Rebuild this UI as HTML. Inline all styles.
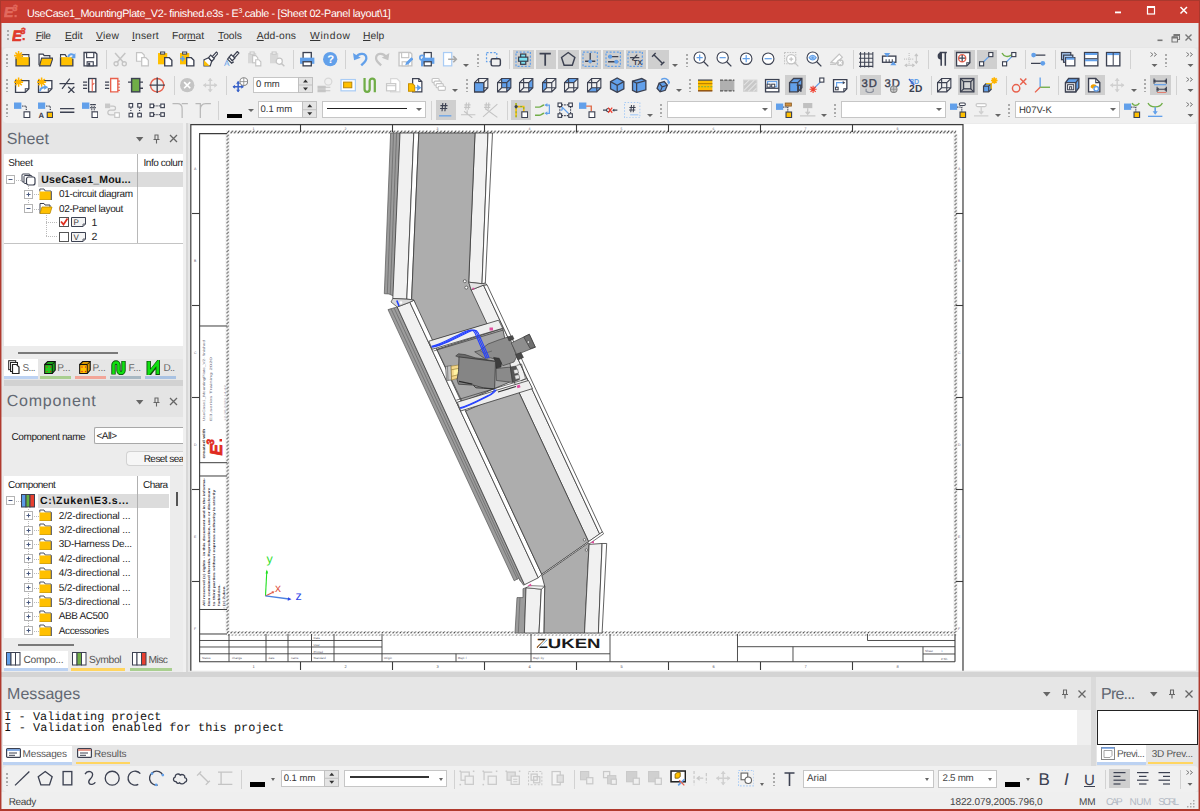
<!DOCTYPE html>
<html lang="en">
<head>
<meta charset="utf-8">
<title>UseCase1_MountingPlate_V2- finished.e3s - E3.cable - [Sheet 02-Panel layout\1]</title>
<style>
*{box-sizing:border-box;margin:0;padding:0}
html,body{width:1200px;height:811px;overflow:hidden}
body{position:relative;text-rendering:geometricPrecision;background:#e6e6e6;font-family:"Liberation Sans",sans-serif;font-size:11px;color:#222}
.abs{position:absolute}
#frame{position:absolute;left:0;top:23px;width:1200px;height:788px;border:1px solid #b03a2e;border-top:none;border-bottom-width:2px;pointer-events:none;z-index:50;box-shadow:inset 1px 0 0 rgba(176,58,46,.45),inset -1px 0 0 rgba(176,58,46,.45)}
#title{position:absolute;left:0;top:0;width:1200px;height:23px;background:#c93c31;color:#fff}
#title .txt{position:absolute;left:27px;top:4px;font-size:12px;letter-spacing:.1px;white-space:nowrap;font-family:"DejaVu Sans","Liberation Sans",sans-serif}
#title sup{font-size:8px;vertical-align:top;position:relative;top:-1px}
#menu{position:absolute;left:1px;top:23px;width:1198px;height:24px;background:#e9e9e9}
#menu span.m{position:absolute;top:5px;font-size:11.5px;color:#333;font-family:"DejaVu Sans","Liberation Sans",sans-serif;white-space:nowrap}
#menu u{text-decoration:underline}
.tbrow{position:absolute;left:4px;height:25px;background:#f0f0f0;border-radius:4px}
.ic{position:absolute;width:16px;height:16px;overflow:visible}
.sep{position:absolute;width:1px;height:19px;background:#d2d2d2}
.grip{position:absolute;width:2px;height:16px;background-image:radial-gradient(circle,#aaa 0.8px,transparent 1.1px);background-size:2px 4px}
.tog{position:absolute;height:21px;background:#cfcfcf}
.dd{position:absolute;width:0;height:0;border-left:3px solid transparent;border-right:3px solid transparent;border-top:3px solid #666}
.inp{position:absolute;background:#fff;border:1px solid #c4c4c4;height:19px;font-size:11px;color:#444;white-space:nowrap;overflow:hidden}
.inp span{position:absolute;left:4px;top:2px}
.panel-h{position:absolute;font-size:18px;color:#555;font-family:"DejaVu Sans","Liberation Sans",sans-serif;white-space:nowrap}
.tree{font-size:10.5px;color:#222;white-space:nowrap;letter-spacing:-.2px}
.tree .r{position:absolute;white-space:nowrap}
.tab{position:absolute;font-size:10.5px;color:#444;font-family:"DejaVu Sans","Liberation Sans",sans-serif;white-space:nowrap}
</style>
</head>
<body>

<div id="title">
<div class="abs" style="left:0;top:0;width:1200px;height:1px;background:#a9382d"></div><div class="abs" style="left:0;top:0;width:1px;height:23px;background:#a9382d"></div><div class="abs" style="left:1199px;top:0;width:1px;height:23px;background:#a9382d"></div>
<svg class="abs" style="left:4px;top:4px;" width="16" height="15" viewBox="0 0 16 15"><text x="0" y="13" font-family="Liberation Sans,sans-serif" font-size="14" font-weight="bold" font-style="italic" fill="#e26a5e" stroke="#e26a5e" stroke-width=".7">E</text><text x="8.5" y="7" font-family="Liberation Sans,sans-serif" font-size="9" font-weight="bold" font-style="italic" fill="#e26a5e" stroke="#e26a5e" stroke-width=".5">3</text><rect x="10.500" y="11" width="2.2" height="2.2" fill="#e26a5e"/></svg>
<div class="abs" style="left:27px;top:8px;font:10.8px 'Liberation Sans',sans-serif;letter-spacing:-0.33px;color:#fff;white-space:nowrap;line-height:12px">UseCase1_MountingPlate_V2- finished.e3s - E<span style="font-size:7px;position:relative;top:-4px">3</span>.cable - [Sheet 02-Panel layout\1]</div>
<svg class="abs" style="left:1110px;top:0px;" width="90" height="23" viewBox="0 0 90 23"><rect x="5" y="11.500" width="6" height="1.800" fill="#fff"/><rect x="37.500" y="7" width="7" height="7" fill="none" stroke="#fff" stroke-width="1.200"/><rect x="37" y="6" width="8" height="2" fill="#fff"/><path d="M70.500 7l6.500 6.500m0-6.500l-6.500 6.500" stroke="#fff" stroke-width="1.500" fill="none"/></svg>
</div>
<div id="menu">
<div class="grip" style="left:6px;top:6px;height:12px"></div>
<svg class="abs" style="left:11px;top:4px;" width="16" height="17" viewBox="0 0 16 17"><text x="0" y="14" font-family="Liberation Sans,sans-serif" font-size="15" font-weight="bold" font-style="italic" fill="#e0392b" stroke="#e0392b" stroke-width=".7">E</text><text x="8.5" y="7" font-family="Liberation Sans,sans-serif" font-size="9" font-weight="bold" font-style="italic" fill="#e0392b" stroke="#e0392b" stroke-width=".5">3</text><rect x="10.500" y="11" width="2.2" height="2.2" fill="#e0392b"/></svg>
<div class="abs" style="left:34.7px;top:8px;font:10.3px 'Liberation Sans',sans-serif;letter-spacing:-0.43px;color:#333;white-space:nowrap;line-height:11px;"><u>F</u>ile</div>
<div class="abs" style="left:64.0px;top:8px;font:10.3px 'Liberation Sans',sans-serif;letter-spacing:-0.02px;color:#333;white-space:nowrap;line-height:11px;"><u>E</u>dit</div>
<div class="abs" style="left:95.0px;top:8px;font:10.3px 'Liberation Sans',sans-serif;letter-spacing:0.29px;color:#333;white-space:nowrap;line-height:11px;"><u>V</u>iew</div>
<div class="abs" style="left:131.0px;top:8px;font:10.3px 'Liberation Sans',sans-serif;letter-spacing:0.19px;color:#333;white-space:nowrap;line-height:11px;"><u>I</u>nsert</div>
<div class="abs" style="left:171.0px;top:8px;font:10.3px 'Liberation Sans',sans-serif;letter-spacing:-0.12px;color:#333;white-space:nowrap;line-height:11px;">For<u>m</u>at</div>
<div class="abs" style="left:217.0px;top:8px;font:10.3px 'Liberation Sans',sans-serif;letter-spacing:-0.01px;color:#333;white-space:nowrap;line-height:11px;"><u>T</u>ools</div>
<div class="abs" style="left:255.7px;top:8px;font:10.3px 'Liberation Sans',sans-serif;letter-spacing:0.16px;color:#333;white-space:nowrap;line-height:11px;"><u>A</u>dd-ons</div>
<div class="abs" style="left:309.0px;top:8px;font:10.3px 'Liberation Sans',sans-serif;letter-spacing:0.67px;color:#333;white-space:nowrap;line-height:11px;"><u>W</u>indow</div>
<div class="abs" style="left:362.0px;top:8px;font:10.3px 'Liberation Sans',sans-serif;letter-spacing:0.04px;color:#333;white-space:nowrap;line-height:11px;"><u>H</u>elp</div>
<svg class="abs" style="left:1150px;top:9px;" width="46" height="14" viewBox="0 0 46 14"><rect x="6.500" y="7.500" width="5" height="1.600" fill="#777"/><path d="M21 5h5.500v5h-5.500zM23 5v-2.500h5.500v5h-2" fill="none" stroke="#777" stroke-width="1.100"/><path d="M21 5.500h5.500M23 3h5.500" stroke="#777" stroke-width="1.800"/><path d="M34.500 2.500l6 6m0-6l-6 6" stroke="#777" stroke-width="1.400" fill="none"/></svg>
</div>
<div class="abs" style="left:3px;top:47.5px;width:1194px;height:75px;background:#f0f0f0;border-radius:4px"></div>
<div class="grip" style="left:6px;top:52.5px;height:14px"></div>
<svg class="abs" style="left:14.3px;top:51.3px" width="16.4" height="16.4" viewBox="0 0 16 16"><path d="M8 6v-2.500h6.500v3" fill="#fff" stroke="#3c4151" stroke-width="1.1" /><rect x="2" y="6" width="13" height="8.5" fill="#ffc000" stroke="none" stroke-width="0"/><path d="M2 6v8.500h13v-8.500" fill="none" stroke="#3c4151" stroke-width="1.3" /><path d="M4.5 0.09999999999999964v8.8M0.09999999999999964 4.5h8.8M1.4 1.4l6.2 6.2M7.6 1.4l-6.2 6.2" fill="none" stroke="#ffb400" stroke-width="1.5" /><circle cx="4.5" cy="4.5" r="2" fill="#ffb400" stroke="none" stroke-width="0"/></svg>
<svg class="abs" style="left:36.8px;top:51.3px" width="16.4" height="16.4" viewBox="0 0 16 16"><path d="M2 14v-11h4l1 1.500h5.500v2" fill="#fff" stroke="#3c4151" stroke-width="1.2" /><path d="M2.500 14.500l2-7.500h11l-2.500 7.500z" fill="#ffc000" stroke="#3c4151" stroke-width="1.1" /></svg>
<svg class="abs" style="left:59.3px;top:51.3px" width="16.4" height="16.4" viewBox="0 0 16 16"><path d="M1.500 6v-2.500h4.500l1.500 2.500" fill="#fff" stroke="#3c4151" stroke-width="1.1" /><rect x="1.5" y="6" width="12" height="8.5" fill="#ffc000" stroke="none" stroke-width="0"/><path d="M1.500 6v8.500h12v-7" fill="none" stroke="#3c4151" stroke-width="1.3" /><path d="M9 6c0.500-3 4-4 6-1" fill="none" stroke="#62a0ea" stroke-width="2" /><path d="M16 2v5h-4.500z" fill="#62a0ea" stroke="none" stroke-width="0" /></svg>
<svg class="abs" style="left:81.8px;top:51.3px" width="16.4" height="16.4" viewBox="0 0 16 16"><path d="M2 1.500h11l1.500 1.500v11.500h-12.500z" fill="#fff" stroke="#3c4151" stroke-width="1.3" /><rect x="4.5" y="1.5" width="7" height="5" fill="#fff" stroke="#3c4151" stroke-width="1.1"/><rect x="5" y="10.5" width="6" height="4" fill="#fff" stroke="#3c4151" stroke-width="1.1"/><rect x="6" y="11.5" width="2" height="3" fill="#3c4151" stroke="none" stroke-width="0"/></svg>
<div class="sep" style="left:105.5px;top:50.0px"></div>
<svg class="abs" style="left:111.8px;top:51.3px" width="16.4" height="16.4" viewBox="0 0 16 16"><path d="M3 2l8 9M13 2l-8 9" fill="none" stroke="#c4c4c4" stroke-width="1.5" /><circle cx="4" cy="12.5" r="2" fill="none" stroke="#c4c4c4" stroke-width="1.3"/><circle cx="12" cy="12.5" r="2" fill="none" stroke="#c4c4c4" stroke-width="1.3"/></svg>
<svg class="abs" style="left:134.3px;top:51.3px" width="16.4" height="16.4" viewBox="0 0 16 16"><path d="M2.500 1.500h5l2.500 2.500v6h-7.500z" fill="#fff" stroke="#c4c4c4" stroke-width="1.2" /><path d="M7.500 6.500h4l2.500 2.500v5.500h-6.500z" fill="#fff" stroke="#c4c4c4" stroke-width="1.2" /></svg>
<svg class="abs" style="left:156.8px;top:51.3px" width="16.4" height="16.4" viewBox="0 0 16 16"><rect x="1" y="2" width="9" height="11" fill="#ffc000" stroke="none" stroke-width="0"/><rect x="3.5" y="1" width="4" height="2" fill="#fff" stroke="#3c4151" stroke-width="1"/><path d="M7.500 6.500h4.500l2.500 2.500v5.500h-7z" fill="#fff" stroke="#3c4151" stroke-width="1.3" /></svg>
<svg class="abs" style="left:179.3px;top:51.3px" width="16.4" height="16.4" viewBox="0 0 16 16"><rect x="1" y="2" width="9" height="11" fill="#ffc000" stroke="none" stroke-width="0"/><rect x="3.5" y="1" width="4" height="2" fill="#fff" stroke="#3c4151" stroke-width="1"/><path d="M7.500 6.500h4.500l2.500 2.500v5.500h-7z" fill="#fff" stroke="#3c4151" stroke-width="1.3" /><path d="M1 7.500h5M3.500 5v5" fill="none" stroke="#62a0ea" stroke-width="1.6" /></svg>
<svg class="abs" style="left:201.8px;top:51.3px" width="16.4" height="16.4" viewBox="0 0 16 16"><path d="M2 8.500l4.500-2 3 3.500-1.500 4.500h-6z" fill="#fff" stroke="#3c4151" stroke-width="1.2" /><path d="M2 9v5.500h5.500z" fill="#ffc000" stroke="none" stroke-width="0" /><path d="M6.500 6.500l2-2.500 3.500 3.500-2.500 2.500zM10 5.500l4-4.500 1.500 1.500-4 4.500z" fill="#fff" stroke="#3c4151" stroke-width="1.2" /></svg>
<svg class="abs" style="left:224.3px;top:51.3px" width="16.4" height="16.4" viewBox="0 0 16 16"><path d="M5 6l2-2.500 3.500 3.500-2.500 2.500zM9 5l4-4.500 1.500 1.500-4 4.500zM5 6l-1.500 2 4 4 2-1.500" fill="#fff" stroke="#3c4151" stroke-width="1.2" /><text x="0" y="15" font-family="Liberation Sans,sans-serif" font-size="8" font-weight="normal" fill="#62a0ea" >A</text></svg>
<svg class="abs" style="left:246.8px;top:51.3px" width="16.4" height="16.4" viewBox="0 0 16 16"><rect x="1" y="2" width="8" height="10" fill="#d8d8d8" stroke="none" stroke-width="0"/><rect x="3" y="1" width="4" height="2" fill="#fff" stroke="#c4c4c4" stroke-width="1"/><path d="M5.500 4.500h3l2 2v5h-5z" fill="#fff" stroke="#c4c4c4" stroke-width="1.1" /><path d="M8.500 8.500h3l2 2v4h-5z" fill="#fff" stroke="#c4c4c4" stroke-width="1.1" /></svg>
<svg class="abs" style="left:269.3px;top:51.3px" width="16.4" height="16.4" viewBox="0 0 16 16"><rect x="1" y="2" width="8" height="10" fill="#d8d8d8" stroke="none" stroke-width="0"/><rect x="3" y="1" width="4" height="2" fill="#fff" stroke="#c4c4c4" stroke-width="1"/><circle cx="10" cy="10" r="3" fill="#fff" stroke="#c4c4c4" stroke-width="1.2"/><path d="M12.200 12.200l2.800 2.800" fill="none" stroke="#c4c4c4" stroke-width="1.4" /></svg>
<div class="sep" style="left:292.5px;top:50.0px"></div>
<svg class="abs" style="left:299.3px;top:51.3px" width="16.4" height="16.4" viewBox="0 0 16 16"><rect x="4" y="1.5" width="8" height="6" fill="#fff" stroke="#3c4151" stroke-width="1.3"/><path d="M1 6.500h14v6h-14z" fill="#62a0ea" stroke="none" stroke-width="0" /><rect x="4" y="10.5" width="8" height="4" fill="#fff" stroke="#3c4151" stroke-width="1.3"/></svg>
<svg class="abs" style="left:321.8px;top:51.3px" width="16.4" height="16.4" viewBox="0 0 16 16"><circle cx="8" cy="8" r="7" fill="#62a0ea" stroke="none" stroke-width="0"/><text x="5.2" y="12" font-family="Liberation Sans,sans-serif" font-size="11" font-weight="bold" fill="#fff" >?</text></svg>
<div class="sep" style="left:345px;top:50.0px"></div>
<svg class="abs" style="left:351.8px;top:51.3px" width="16.4" height="16.4" viewBox="0 0 16 16"><path d="M4 6c3-5 10-4 10 1c0 3-3 5-5 7" fill="none" stroke="#62a0ea" stroke-width="2.2" /><path d="M1 2l1 7 6.500-2.500z" fill="#62a0ea" stroke="none" stroke-width="0" /></svg>
<svg class="abs" style="left:374.3px;top:51.3px" width="16.4" height="16.4" viewBox="0 0 16 16"><path d="M12 6c-3-5-10-4-10 1c0 3 3 5 5 7" fill="none" stroke="#c4c4c4" stroke-width="2.2" /><path d="M15 2l-1 7-6.500-2.500z" fill="#c4c4c4" stroke="none" stroke-width="0" /></svg>
<svg class="abs" style="left:396.8px;top:51.3px" width="16.4" height="16.4" viewBox="0 0 16 16"><path d="M2 1.500h11l1.500 1.500v11.500h-12.500z" fill="#fff" stroke="#c4c4c4" stroke-width="1.3" /><rect x="4.5" y="1.5" width="7" height="5" fill="#fff" stroke="#c4c4c4" stroke-width="1.1"/><rect x="5" y="10.5" width="6" height="4" fill="#fff" stroke="#c4c4c4" stroke-width="1.1"/><path d="M8 14l1-3 5-5 2 2-5 5z" fill="#62a0ea" stroke="none" stroke-width="0" /></svg>
<svg class="abs" style="left:419.3px;top:51.3px" width="16.4" height="16.4" viewBox="0 0 16 16"><rect x="5" y="1.5" width="7" height="6" fill="#fff" stroke="#3c4151" stroke-width="1.2"/><path d="M3 6.500h12v6h-12z" fill="#62a0ea" stroke="none" stroke-width="0" /><rect x="5" y="10.5" width="7" height="4" fill="#fff" stroke="#3c4151" stroke-width="1.2"/><path d="M3 15v-6" fill="none" stroke="#62a0ea" stroke-width="2" /><circle cx="3" cy="6.5" r="2.2" fill="none" stroke="#62a0ea" stroke-width="1.6"/></svg>
<svg class="abs" style="left:441.8px;top:51.3px" width="16.4" height="16.4" viewBox="0 0 16 16"><rect x="1.5" y="1.5" width="8" height="13" fill="#fff" stroke="#a9ccf5" stroke-width="1.2"/><path d="M6 8h8M11 5l3 3-3 3" fill="none" stroke="#a8a8a8" stroke-width="1.5" /></svg>
<div class="dd" style="left:463px;top:63.5px"></div>
<div class="grip" style="left:477px;top:52.5px;height:14px"></div>
<svg class="abs" style="left:485.3px;top:51.3px" width="16.4" height="16.4" viewBox="0 0 16 16"><rect x="1.5" y="1.5" width="10" height="9" fill="none" stroke="#62a0ea" stroke-width="1.2" stroke-dasharray="2 1.500"/><rect x="6" y="7.5" width="9" height="7" fill="#f0f0f0" stroke="#3c4151" stroke-width="1.4" rx="1.5"/></svg>
<div class="sep" style="left:508.5px;top:50.0px"></div>
<div class="tog" style="left:513px;top:49.5px;width:20.5px;height:19.5px"></div>
<svg class="abs" style="left:514.8px;top:51.3px" width="16.4" height="16.4" viewBox="0 0 16 16"><rect x="1" y="1" width="14" height="14" fill="none" stroke="#62a0ea" stroke-width="1.2" stroke-dasharray="2 1.500"/><rect x="5.5" y="3" width="5" height="10" fill="#7de0f0" stroke="#3c4151" stroke-width="1.2"/><rect x="3.5" y="6" width="9" height="4" fill="#7de0f0" stroke="#3c4151" stroke-width="1.2"/></svg>
<div class="tog" style="left:535.5px;top:49.5px;width:20.5px;height:19.5px"></div>
<svg class="abs" style="left:537.3px;top:51.3px" width="16.4" height="16.4" viewBox="0 0 16 16"><path d="M2.500 2.500h11M8 2.500v12" fill="none" stroke="#3c4151" stroke-width="1.7" /></svg>
<div class="tog" style="left:558px;top:49.5px;width:20.5px;height:19.5px"></div>
<svg class="abs" style="left:559.8px;top:51.3px" width="16.4" height="16.4" viewBox="0 0 16 16"><path d="M8 1.500l6.500 4.800-2.500 7.700h-8l-2.500-7.700z" fill="none" stroke="#3c4151" stroke-width="1.4" /></svg>
<div class="tog" style="left:580.5px;top:49.5px;width:20.5px;height:19.5px"></div>
<svg class="abs" style="left:582.3px;top:51.3px" width="16.4" height="16.4" viewBox="0 0 16 16"><rect x="1" y="1" width="14" height="14" fill="none" stroke="#62a0ea" stroke-width="1.2" stroke-dasharray="2 1.500"/><path d="M8 2v10M3 10h10" fill="none" stroke="#3c4151" stroke-width="1.3" /><circle cx="8" cy="10" r="1.8" fill="#62a0ea" stroke="none" stroke-width="0"/></svg>
<div class="tog" style="left:603px;top:49.5px;width:20.5px;height:19.5px"></div>
<svg class="abs" style="left:604.8px;top:51.3px" width="16.4" height="16.4" viewBox="0 0 16 16"><rect x="1" y="1" width="14" height="14" fill="none" stroke="#62a0ea" stroke-width="1.2" stroke-dasharray="2 1.500"/><path d="M3 5.500h10M3 10.500h10" fill="none" stroke="#3c4151" stroke-width="1.3" /><circle cx="5" cy="5.5" r="2" fill="#62a0ea" stroke="none" stroke-width="0"/><circle cx="11" cy="10.5" r="2" fill="#62a0ea" stroke="none" stroke-width="0"/></svg>
<div class="tog" style="left:625.5px;top:49.5px;width:20.5px;height:19.5px"></div>
<svg class="abs" style="left:627.3px;top:51.3px" width="16.4" height="16.4" viewBox="0 0 16 16"><rect x="1" y="1" width="14" height="14" fill="none" stroke="#62a0ea" stroke-width="1.2" stroke-dasharray="2 1.500"/><path d="M3 6.500h9M5 9l5-5.500" fill="none" stroke="#3c4151" stroke-width="1.2" /><text x="6" y="14" font-family="Liberation Sans,sans-serif" font-size="7" font-weight="bold" fill="#3c4151" >TX</text></svg>
<div class="tog" style="left:648px;top:49.5px;width:20.5px;height:19.5px"></div>
<svg class="abs" style="left:649.8px;top:51.3px" width="16.4" height="16.4" viewBox="0 0 16 16"><path d="M3.500 3.500l9 9M2 5.500l3.500-3.500M10.500 14l3.500-3.500" fill="none" stroke="#3c4151" stroke-width="1.4" /></svg>
<div class="dd" style="left:672px;top:63.5px"></div>
<div class="grip" style="left:685.5px;top:52.5px;height:14px"></div>
<svg class="abs" style="left:692.8px;top:51.3px" width="16.4" height="16.4" viewBox="0 0 16 16"><circle cx="6.5" cy="6.5" r="5.5" fill="#fff" stroke="#3c4151" stroke-width="1.1"/><path d="M10.500 10.500l4.500 4.500" fill="none" stroke="#3c4151" stroke-width="1.3" /><path d="M3.500 6.500h6M6.500 3.500v6" fill="none" stroke="#62a0ea" stroke-width="1.2" /></svg>
<svg class="abs" style="left:715.8px;top:51.3px" width="16.4" height="16.4" viewBox="0 0 16 16"><circle cx="6.5" cy="6.5" r="5.5" fill="#fff" stroke="#3c4151" stroke-width="1.1"/><path d="M10.500 10.500l4.500 4.500" fill="none" stroke="#3c4151" stroke-width="1.3" /><path d="M3.500 6.500h6" fill="none" stroke="#62a0ea" stroke-width="1.2" /></svg>
<svg class="abs" style="left:738.3px;top:51.3px" width="16.4" height="16.4" viewBox="0 0 16 16"><circle cx="8" cy="7.5" r="5.6" fill="#fff" stroke="#3c4151" stroke-width="1.1"/><path d="M4.500 7.500h7M8 4v7" fill="none" stroke="#62a0ea" stroke-width="1.2" /></svg>
<svg class="abs" style="left:759.8px;top:51.3px" width="16.4" height="16.4" viewBox="0 0 16 16"><circle cx="8" cy="7.5" r="5.6" fill="#fff" stroke="#3c4151" stroke-width="1.1"/><path d="M4.500 7.500h7" fill="none" stroke="#62a0ea" stroke-width="1.2" /></svg>
<svg class="abs" style="left:783.3px;top:51.3px" width="16.4" height="16.4" viewBox="0 0 16 16"><rect x="1.5" y="1.5" width="11" height="11" fill="none" stroke="#c4c4c4" stroke-width="1" stroke-dasharray="1.500 1"/><circle cx="8" cy="8" r="4.5" fill="#fff" stroke="#c4c4c4" stroke-width="1.2"/><path d="M11 11l4 4M6 8h4M8 6v4" fill="none" stroke="#c4c4c4" stroke-width="1.2" /></svg>
<svg class="abs" style="left:805.8px;top:51.3px" width="16.4" height="16.4" viewBox="0 0 16 16"><circle cx="6.5" cy="6.5" r="5.5" fill="#fff" stroke="#3c4151" stroke-width="1.1"/><path d="M10.500 10.500l4.500 4.500" fill="none" stroke="#3c4151" stroke-width="1.3" /><path d="M3 6.500c2-3 5-3 7 0c-2 3-5 3-7 0z" fill="#a9ccf5" stroke="#62a0ea" stroke-width="1" /><circle cx="6.5" cy="6.5" r="1.2" fill="#62a0ea" stroke="none" stroke-width="0"/></svg>
<svg class="abs" style="left:828.8px;top:51.3px" width="16.4" height="16.4" viewBox="0 0 16 16"><path d="M2 11l8-8 3 3-6 6z" fill="#fff" stroke="#c4c4c4" stroke-width="1.2" /><path d="M1 13h6" fill="none" stroke="#c4c4c4" stroke-width="1.2" /><circle cx="11" cy="11.5" r="3.5" fill="#c4c4c4" stroke="none" stroke-width="0"/><path d="M9.500 10l3 3m0-3l-3 3" fill="none" stroke="#fff" stroke-width="1.2" /></svg>
<div class="sep" style="left:852.5px;top:50.0px"></div>
<svg class="abs" style="left:858.3px;top:51.3px" width="16.4" height="16.4" viewBox="0 0 16 16"><path d="M1 3h14M1 7h14M1 11h14M1 15h14M2.500 1v15M6.500 1v15M10.500 1v15M14.500 1v15" fill="none" stroke="#3c4151" stroke-width="1" /></svg>
<svg class="abs" style="left:880.8px;top:51.3px" width="16.4" height="16.4" viewBox="0 0 16 16"><rect x="1.5" y="5" width="13" height="6" fill="#fff" stroke="#3c4151" stroke-width="1.3"/><path d="M5 11v-3M8 11v-3M11 11v-3" fill="none" stroke="#3c4151" stroke-width="1" /><path d="M3 2h6l-3 4z" fill="#62a0ea" stroke="none" stroke-width="0" /><path d="M9 14h6l-3-4z" fill="#62a0ea" stroke="none" stroke-width="0" /></svg>
<svg class="abs" style="left:903.3px;top:51.3px" width="16.4" height="16.4" viewBox="0 0 16 16"><path d="M1 8h10M6 2v12" fill="none" stroke="#c4c4c4" stroke-width="1.2"  stroke-dasharray="1 1"/><path d="M13 3v9M11.500 5l1.500-2 1.500 2M11.500 10l1.500 2 1.500-2M2 14h9M4 12.500l-2 1.500 2 1.500M9 12.500l2 1.500-2 1.500" fill="none" stroke="#c4c4c4" stroke-width="1" /></svg>
<div class="sep" style="left:927.5px;top:50.0px"></div>
<svg class="abs" style="left:933.3px;top:51.3px" width="16.4" height="16.4" viewBox="0 0 16 16"><path d="M8 1.500v13M12 1.500v13M13.500 1.500h-7" fill="none" stroke="#3c4151" stroke-width="1.5" /><path d="M8 1.500a3.500 3.500 0 0 0 0 7z" fill="#3c4151" stroke="none" stroke-width="0" /></svg>
<div class="tog" style="left:954px;top:49.5px;width:20.5px;height:19.5px"></div>
<svg class="abs" style="left:955.3px;top:51.3px" width="16.4" height="16.4" viewBox="0 0 16 16"><path d="M1.500 1.500h13v10l-3 3h-10z" fill="#fff" stroke="#3c4151" stroke-width="1.3" /><path d="M14.500 11.500h-3v3" fill="none" stroke="#3c4151" stroke-width="1" /><circle cx="7" cy="7" r="3.5" fill="none" stroke="#e8604c" stroke-width="1.3"/><path d="M4 7h6M7 4v6" fill="none" stroke="#3c4151" stroke-width="1.2" /></svg>
<div class="tog" style="left:976.5px;top:49.5px;width:20.5px;height:19.5px"></div>
<svg class="abs" style="left:978.3px;top:51.3px" width="16.4" height="16.4" viewBox="0 0 16 16"><path d="M4 12l8-8" fill="none" stroke="#62a0ea" stroke-width="1.2" /><rect x="1.5" y="10.5" width="4" height="4" fill="#fff" stroke="#3c4151" stroke-width="1.1"/><rect x="10.5" y="1.5" width="4" height="4" fill="#fff" stroke="#3c4151" stroke-width="1.1"/></svg>
<svg class="abs" style="left:1000.8px;top:51.3px" width="16.4" height="16.4" viewBox="0 0 16 16"><path d="M4 12l8-8" fill="none" stroke="#62a0ea" stroke-width="1.2" /><path d="M1 2c2 4 6 4 9 2" fill="none" stroke="#70ad47" stroke-width="1.4" /><rect x="1.5" y="10.5" width="4" height="4" fill="#fff" stroke="#3c4151" stroke-width="1.1"/><rect x="10.5" y="1.5" width="4" height="4" fill="#fff" stroke="#3c4151" stroke-width="1.1"/></svg>
<div class="sep" style="left:1024.5px;top:50.0px"></div>
<svg class="abs" style="left:1030.3px;top:51.3px" width="16.4" height="16.4" viewBox="0 0 16 16"><path d="M5 4h10M1 12h10" fill="none" stroke="#3c4151" stroke-width="1.3" /><circle cx="3.5" cy="4" r="2.3" fill="#62a0ea" stroke="none" stroke-width="0"/><circle cx="12.5" cy="12" r="2.3" fill="#62a0ea" stroke="none" stroke-width="0"/></svg>
<div class="sep" style="left:1054.5px;top:50.0px"></div>
<svg class="abs" style="left:1060.3px;top:51.3px" width="16.4" height="16.4" viewBox="0 0 16 16"><rect x="1.5" y="1.5" width="9" height="7" fill="#a9ccf5" stroke="#3c4151" stroke-width="1.2"/><rect x="3.5" y="4" width="9" height="7" fill="#a9ccf5" stroke="#3c4151" stroke-width="1.2"/><rect x="5.5" y="6.5" width="9" height="8" fill="#fff" stroke="#3c4151" stroke-width="1.2"/><path d="M6 7.500h8" fill="none" stroke="#62a0ea" stroke-width="2" /></svg>
<svg class="abs" style="left:1082.8px;top:51.3px" width="16.4" height="16.4" viewBox="0 0 16 16"><rect x="1.5" y="1.5" width="13" height="13" fill="#fff" stroke="#3c4151" stroke-width="1.3"/><path d="M2 3h12M2 9h12" fill="none" stroke="#62a0ea" stroke-width="2" /><path d="M2 7.500h12" fill="none" stroke="#3c4151" stroke-width="1" /></svg>
<svg class="abs" style="left:1105.3px;top:51.3px" width="16.4" height="16.4" viewBox="0 0 16 16"><rect x="1.5" y="1.5" width="13" height="13" fill="#fff" stroke="#3c4151" stroke-width="1.3"/><path d="M2 3h12" fill="none" stroke="#62a0ea" stroke-width="2" /><path d="M8 2v12" fill="none" stroke="#3c4151" stroke-width="1" /></svg>
<div class="sep" style="left:1129.5px;top:50.0px"></div>
<svg class="abs" style="left:1150px;top:49.5px;" width="8" height="20" viewBox="0 0 8 20"><path d="M0.500 2.500l2.500 2-2.500 2M4 2.500l2.500 2-2.500 2" fill="none" stroke="#777" stroke-width="1"/><path d="M1.500 14h6l-3 3z" fill="#666"/></svg>
<div class="grip" style="left:1165px;top:52.5px;height:14px"></div>
<svg class="abs" style="left:1186px;top:49.5px;" width="8" height="20" viewBox="0 0 8 20"><path d="M0.500 2.500l2.500 2-2.500 2M4 2.500l2.500 2-2.500 2" fill="none" stroke="#777" stroke-width="1"/><path d="M1.500 14h6l-3 3z" fill="#666"/></svg>
<div class="grip" style="left:6px;top:78px;height:14px"></div>
<svg class="abs" style="left:14.3px;top:76.5px" width="16.4" height="16.4" viewBox="0 0 16 16"><path d="M1.500 3.500h13v8l-3.500 3.500h-9.500z" fill="#fff" stroke="#3c4151" stroke-width="1.3" /><path d="M14.500 11.500h-3.500v3.500" fill="none" stroke="#3c4151" stroke-width="1" /><path d="M4.5 0.5999999999999996v8.8M0.09999999999999964 5h8.8M1.4 1.9l6.2 6.2M7.6 1.9l-6.2 6.2" fill="none" stroke="#ffb400" stroke-width="1.5" /><circle cx="4.5" cy="5" r="2" fill="#ffb400" stroke="none" stroke-width="0"/></svg>
<svg class="abs" style="left:36.8px;top:76.5px" width="16.4" height="16.4" viewBox="0 0 16 16"><path d="M1.500 3.500h13v8l-3.500 3.500h-9.500z" fill="#fff" stroke="#3c4151" stroke-width="1.3" /><path d="M14.500 11.500h-3.500v3.500" fill="none" stroke="#3c4151" stroke-width="1" /><path d="M4.5 0.5999999999999996v8.8M0.09999999999999964 5h8.8M1.4 1.9l6.2 6.2M7.6 1.9l-6.2 6.2" fill="none" stroke="#ffb400" stroke-width="1.5" /><circle cx="4.5" cy="5" r="2" fill="#ffb400" stroke="none" stroke-width="0"/><path d="M3 14c0-3 2-4 5-4" fill="none" stroke="#62a0ea" stroke-width="1.8" /><path d="M7 7.500l4 2.500-4 2.500z" fill="#62a0ea" stroke="none" stroke-width="0" /></svg>
<svg class="abs" style="left:59.3px;top:76.5px" width="16.4" height="16.4" viewBox="0 0 16 16"><path d="M0.500 6.500h14.500M3 11.500l7.500-10" fill="none" stroke="#3c4151" stroke-width="1.2" /><path d="M9 9.500l6 6m0-6l-6 6" fill="none" stroke="#3c4151" stroke-width="1.3" /></svg>
<svg class="abs" style="left:81.8px;top:76.5px" width="16.4" height="16.4" viewBox="0 0 16 16"><rect x="6.5" y="1.5" width="7" height="13" fill="#fff" stroke="#3c4151" stroke-width="1.3"/><path d="M10 2v12M10 8l2-2" fill="none" stroke="#e8604c" stroke-width="1.1" /><path d="M1 5h4M1 8h4M1 11h4" fill="none" stroke="#3c4151" stroke-width="1.2" /></svg>
<svg class="abs" style="left:104.3px;top:76.5px" width="16.4" height="16.4" viewBox="0 0 16 16"><path d="M6.500 1.500h7v13h-7z" fill="#fff" stroke="#e8604c" stroke-width="1.3" /><path d="M13.500 4h2M13.500 7h2M13.500 10h2M13.500 13h2" fill="none" stroke="#e8604c" stroke-width="1.2" /><path d="M1 5h4M1 8h4M1 11h4" fill="none" stroke="#3c4151" stroke-width="1.2" /></svg>
<svg class="abs" style="left:126.8px;top:76.5px" width="16.4" height="16.4" viewBox="0 0 16 16"><rect x="4.5" y="1.5" width="8" height="13" fill="#70ad47" stroke="#3c4151" stroke-width="1.4"/><path d="M1 5h3.500M12.500 5h3.500M12.500 11h3.500" fill="none" stroke="#3c4151" stroke-width="1.4" /></svg>
<svg class="abs" style="left:148.8px;top:76.5px" width="16.4" height="16.4" viewBox="0 0 16 16"><circle cx="8" cy="8" r="6.5" fill="none" stroke="#e8604c" stroke-width="1.4"/><path d="M8 0.500v15M0.500 8h15" fill="none" stroke="#3c4151" stroke-width="1.3" /></svg>
<div class="sep" style="left:173.5px;top:75.5px"></div>
<svg class="abs" style="left:179.3px;top:76.5px" width="16.4" height="16.4" viewBox="0 0 16 16"><circle cx="8" cy="8" r="7" fill="#c4c4c4" stroke="none" stroke-width="0"/><path d="M5 5l6 6m0-6l-6 6" fill="none" stroke="#fff" stroke-width="1.6" /></svg>
<svg class="abs" style="left:201.8px;top:76.5px" width="16.4" height="16.4" viewBox="0 0 16 16"><path d="M8 1.500v13M1.500 8h13" fill="none" stroke="#d0d0d0" stroke-width="1.4" /><path d="M5.500 4l2.500-3 2.500 3zM5.500 12l2.500 3 2.500-3zM4 5.500l-3 2.500 3 2.500zM12 5.500l3 2.500-3 2.500z" fill="#d0d0d0" stroke="none" stroke-width="0" /></svg>
<div class="sep" style="left:225.5px;top:75.5px"></div>
<svg class="abs" style="left:231.8px;top:76.5px" width="16.4" height="16.4" viewBox="0 0 16 16"><circle cx="11.5" cy="4.5" r="3.8" fill="#fff" stroke="#888" stroke-width="1"/><path d="M7.800 4.500h7.400M11.500 0.800v7.400" fill="none" stroke="#888" stroke-width="0.8" /><path d="M6 4.500v10M1 9.500h10" fill="none" stroke="#3a62c8" stroke-width="1.5" /><path d="M4 6.500l2-2.500 2 2.500zM4 12.500l2 2.500 2-2.500zM3 7.500l-2.500 2 2.500 2zM9 7.500l2.500 2-2.500 2z" fill="#3a62c8" stroke="none" stroke-width="0" /></svg>
<svg class="abs" style="left:316.8px;top:76.5px" width="16.4" height="16.4" viewBox="0 0 16 16"><path d="M1 9h7v2h-7zM1 12.500h7v2h-7zM8 10h5M8 13.500h5" fill="#c4c4c4" stroke="#c4c4c4" stroke-width="1" /><circle cx="11" cy="4.5" r="3.5" fill="none" stroke="#d8d8d8" stroke-width="1.2"/></svg>
<svg class="abs" style="left:339.8px;top:76.5px" width="16.4" height="16.4" viewBox="0 0 16 16"><rect x="1" y="2.5" width="14" height="11" fill="#fff" stroke="#a9ccf5" stroke-width="1.2"/><rect x="3.5" y="5" width="8" height="5.5" fill="#ffc000" stroke="#b8860b" stroke-width="1"/></svg>
<svg class="abs" style="left:361.8px;top:76.5px" width="16.4" height="16.4" viewBox="0 0 16 16"><path d="M2.500 1v11a2.500 2.500 0 0 0 5 0v-8a2.500 2.500 0 0 1 5 0v11" fill="none" stroke="#70ad47" stroke-width="2.2" /></svg>
<svg class="abs" style="left:384.8px;top:76.5px" width="16.4" height="16.4" viewBox="0 0 16 16"><path d="M5.500 1.500h6l3 3v10h-9z" fill="#fff" stroke="#d8d8d8" stroke-width="1.2" /><rect x="1.5" y="6.5" width="9" height="7" fill="#fff" stroke="#c8c8c8" stroke-width="1.2"/><path d="M1.500 8.500h9" fill="none" stroke="#c8c8c8" stroke-width="1" /></svg>
<svg class="abs" style="left:407.3px;top:76.5px" width="16.4" height="16.4" viewBox="0 0 16 16"><path d="M5.500 1.500h6l3 3v10h-9z" fill="#fff" stroke="#3c4151" stroke-width="1.2" /><path d="M11.500 1.500v3h3" fill="none" stroke="#3c4151" stroke-width="1" /><path d="M1.500 6.500h4l2 2v5.500h-6z" fill="#ffc000" stroke="#c89000" stroke-width="1" /><path d="M8 10.500h4M10.500 8.500l2.500 2-2.500 2z" fill="#62a0ea" stroke="#62a0ea" stroke-width="1.2" /></svg>
<svg class="abs" style="left:429.8px;top:76.5px" width="16.4" height="16.4" viewBox="0 0 16 16"><rect x="2" y="1.5" width="7" height="4" fill="#fff" stroke="#c4c4c4" stroke-width="1.1" rx="1"/><rect x="4" y="4" width="7" height="4" fill="#fff" stroke="#c4c4c4" stroke-width="1.1" rx="1"/><rect x="6" y="6.5" width="7" height="4" fill="#fff" stroke="#c4c4c4" stroke-width="1.1" rx="1"/><rect x="8" y="9" width="7" height="4" fill="#fff" stroke="#c4c4c4" stroke-width="1.1" rx="1"/></svg>
<div class="dd" style="left:451.5px;top:89.0px"></div>
<div class="grip" style="left:465.5px;top:78px;height:14px"></div>
<svg class="abs" style="left:473.3px;top:76.5px" width="16.4" height="16.4" viewBox="0 0 16 16"><path d="M1.500 5.500h9v9h-9zM5.500 1.500h9v9h-9zM1.500 5.500l4-4M10.500 5.500l4-4M1.500 14.500l4-4M10.500 14.500l4-4" fill="none" stroke="#3c4151" stroke-width="1.1" /><path d="M1.500 5.500h9v9h-9z" fill="#62a0ea" stroke="#3c4151" stroke-width="1.1" /></svg>
<svg class="abs" style="left:495.8px;top:76.5px" width="16.4" height="16.4" viewBox="0 0 16 16"><path d="M5.500 1.500h9v9h-9z" fill="#62a0ea" stroke="none" stroke-width="0" /><path d="M10.500 5.500l4-4v9l-4 4z" fill="#62a0ea" stroke="none" stroke-width="0" /><path d="M1.500 5.500h9v9h-9zM5.500 1.500h9v9h-9zM1.500 5.500l4-4M10.500 5.500l4-4M1.500 14.500l4-4M10.500 14.500l4-4" fill="none" stroke="#3c4151" stroke-width="1.1" /></svg>
<svg class="abs" style="left:518.3px;top:76.5px" width="16.4" height="16.4" viewBox="0 0 16 16"><path d="M10.500 5.500l4-4v9l-4 4z" fill="#62a0ea" stroke="none" stroke-width="0" /><path d="M1.500 5.500h9v9h-9zM5.500 1.500h9v9h-9zM1.500 5.500l4-4M10.500 5.500l4-4M1.500 14.500l4-4M10.500 14.500l4-4" fill="none" stroke="#3c4151" stroke-width="1.1" /></svg>
<svg class="abs" style="left:540.8px;top:76.5px" width="16.4" height="16.4" viewBox="0 0 16 16"><path d="M1.500 5.500l4-4v9l-4 4z" fill="#62a0ea" stroke="none" stroke-width="0" /><path d="M1.500 5.500h9v9h-9zM5.500 1.500h9v9h-9zM1.500 5.500l4-4M10.500 5.500l4-4M1.500 14.500l4-4M10.500 14.500l4-4" fill="none" stroke="#3c4151" stroke-width="1.1" /></svg>
<svg class="abs" style="left:563.3px;top:76.5px" width="16.4" height="16.4" viewBox="0 0 16 16"><path d="M1.500 5.500l4-4h9l-4 4z" fill="#62a0ea" stroke="none" stroke-width="0" /><path d="M1.500 5.500h9v9h-9zM5.500 1.500h9v9h-9zM1.500 5.500l4-4M10.500 5.500l4-4M1.500 14.500l4-4M10.500 14.500l4-4" fill="none" stroke="#3c4151" stroke-width="1.1" /></svg>
<svg class="abs" style="left:585.8px;top:76.5px" width="16.4" height="16.4" viewBox="0 0 16 16"><path d="M1.500 14.500l4-4h9l-4 4z" fill="#62a0ea" stroke="none" stroke-width="0" /><path d="M1.500 5.500h9v9h-9zM5.500 1.500h9v9h-9zM1.500 5.500l4-4M10.500 5.500l4-4M1.500 14.500l4-4M10.500 14.500l4-4" fill="none" stroke="#3c4151" stroke-width="1.1" /></svg>
<svg class="abs" style="left:608.8px;top:76.5px" width="16.4" height="16.4" viewBox="0 0 16 16"><path d="M8 1l6.500 3.500v7l-6.500 3.500-6.500-3.500v-7z" fill="#62a0ea" stroke="#3c4151" stroke-width="1.3" /><path d="M1.500 4.500l6.500 3.500 6.500-3.500M8 8v7" fill="none" stroke="#3c4151" stroke-width="1.2" /></svg>
<svg class="abs" style="left:631.3px;top:76.5px" width="16.4" height="16.4" viewBox="0 0 16 16"><path d="M1.500 4l9-2.500 4 2v9l-9 2.500-4-2z" fill="#62a0ea" stroke="#3c4151" stroke-width="1.3" /><path d="M1.500 4l4 2 9-2.500M5.500 6v9" fill="none" stroke="#3c4151" stroke-width="1.2" /></svg>
<svg class="abs" style="left:653.8px;top:76.5px" width="16.4" height="16.4" viewBox="0 0 16 16"><path d="M5 6l5-1.500 3 3.500-2 5-5 1.500-3-3.500z" fill="#62a0ea" stroke="#3c4151" stroke-width="1.3" /><path d="M5 6l3 3.500 5-1.500M8 9.500l-2 5" fill="none" stroke="#3c4151" stroke-width="1.1" /><path d="M7 2.500c3-2 7-1 7.500 2.500" fill="none" stroke="#62a0ea" stroke-width="1.4" /><path d="M12.500 4.500h3.500l-1.500 3z" fill="#62a0ea" stroke="none" stroke-width="0" /></svg>
<div class="dd" style="left:675.5px;top:89.0px"></div>
<div class="grip" style="left:689px;top:78px;height:14px"></div>
<svg class="abs" style="left:696.8px;top:76.5px" width="16.4" height="16.4" viewBox="0 0 16 16"><rect x="1" y="3" width="14" height="10.5" fill="#ffc000" stroke="none" stroke-width="0"/><path d="M1 3h14" fill="none" stroke="#3c4151" stroke-width="1.2" /><path d="M1 6.500h14" fill="none" stroke="#b07800" stroke-width="1" /><path d="M1 9.500h14" fill="none" stroke="#70ad47" stroke-width="1"  stroke-dasharray="2 1"/><path d="M1 13.500h14" fill="none" stroke="#8a4a10" stroke-width="1.4" /></svg>
<svg class="abs" style="left:719.3px;top:76.5px" width="16.4" height="16.4" viewBox="0 0 16 16"><rect x="1.5" y="3.5" width="13" height="9.5" fill="#b0b0b0" stroke="#b0b0b0" stroke-width="1"/><path d="M1 3h14M1 13.500h14" fill="none" stroke="#555" stroke-width="1.2"  stroke-dasharray="3 1.200"/></svg>
<svg class="abs" style="left:742.3px;top:76.5px" width="16.4" height="16.4" viewBox="0 0 16 16"><rect x="1.5" y="3" width="13" height="11" fill="#c8c8c8" stroke="#d4d4d4" stroke-width="1"/><path d="M2 8l5-5M2 13l10-10M6 14l8-8M11 14l3-3" fill="none" stroke="#e4e4e4" stroke-width="1" /></svg>
<svg class="abs" style="left:764.3px;top:76.5px" width="16.4" height="16.4" viewBox="0 0 16 16"><rect x="1.5" y="2.5" width="13" height="12" fill="#fff" stroke="#3c4151" stroke-width="1.3"/><path d="M1.500 11h13" fill="none" stroke="#3c4151" stroke-width="1.2" /><rect x="3.5" y="4.5" width="9" height="5" fill="none" stroke="#62a0ea" stroke-width="1.1"/><rect x="3" y="7" width="3" height="3" fill="#fff" stroke="#3c4151" stroke-width="1"/><rect x="7.5" y="7" width="3" height="3" fill="#fff" stroke="#3c4151" stroke-width="1"/></svg>
<div class="tog" style="left:785px;top:75px;width:21px;height:19.5px"></div>
<svg class="abs" style="left:786.8px;top:76.5px" width="16.4" height="16.4" viewBox="0 0 16 16"><path d="M2.500 5.500l4-4h8v9l-4 4h-8z" fill="#62a0ea" stroke="#3c4151" stroke-width="1.3" /><path d="M2.500 5.500h8v9M10.500 5.500l4-4" fill="none" stroke="#3c4151" stroke-width="1.2" /><path d="M9.500 8h5M11 8v6.500M13.500 8v6.500" fill="none" stroke="#3c4151" stroke-width="1.5" /></svg>
<svg class="abs" style="left:809.3px;top:76.5px" width="16.4" height="16.4" viewBox="0 0 16 16"><path d="M4 12l8-8" fill="none" stroke="#62a0ea" stroke-width="1.2" /><rect x="10.5" y="1" width="4" height="4" fill="#fff" stroke="#3c4151" stroke-width="1.1"/><path d="M4 8.500v7M0.500 12h7M1.500 9.500l5 5M6.500 9.500l-5 5" fill="none" stroke="#f04030" stroke-width="1.1" /></svg>
<svg class="abs" style="left:831.8px;top:76.5px" width="16.4" height="16.4" viewBox="0 0 16 16"><path d="M1.500 2.500h13v9l-3 3h-10z" fill="#fff" stroke="#3c4151" stroke-width="1.3" /><path d="M14.500 11.500h-3v3" fill="none" stroke="#3c4151" stroke-width="1" /><path d="M4.500 11v-5.500h7" fill="none" stroke="#62a0ea" stroke-width="1.1" /><rect x="3.5" y="10" width="2.5" height="2.5" fill="#fff" stroke="#3c4151" stroke-width="1"/><path d="M10.500 4l2.500 1.500-2.500 1.500z" fill="#3c4151" stroke="none" stroke-width="0" /></svg>
<div class="sep" style="left:856px;top:75.5px"></div>
<div class="tog" style="left:860px;top:75px;width:21px;height:19.5px"></div>
<svg class="abs" style="left:861.3px;top:76.5px" width="16.4" height="16.4" viewBox="0 0 16 16"><text x="0.5" y="10" font-family="Liberation Sans,sans-serif" font-size="11" font-weight="normal" fill="#3c4151" textLength="15" stroke="#3c4151" stroke-width=".35">3D</text><path d="M5 11.500v2.500c2 1.500 5 1.500 7 0v-2.500" fill="none" stroke="#8a8f9c" stroke-width="1.2" /></svg>
<svg class="abs" style="left:884.3px;top:76.5px" width="16.4" height="16.4" viewBox="0 0 16 16"><text x="0.5" y="10" font-family="Liberation Sans,sans-serif" font-size="11" font-weight="normal" fill="#3c4151" textLength="15" stroke="#3c4151" stroke-width=".35">3D</text><circle cx="9.5" cy="12" r="3.2" fill="#c8c8c8" stroke="#888" stroke-width="1"/><path d="M6.300 12h6.400M9.500 8.800v6.400" fill="none" stroke="#888" stroke-width="0.7" /></svg>
<svg class="abs" style="left:906.8px;top:76.5px" width="16.4" height="16.4" viewBox="0 0 16 16"><text x="3" y="7" font-family="Liberation Sans,sans-serif" font-size="7" font-weight="bold" fill="#62a0ea" >3D</text><text x="2" y="15" font-family="Liberation Sans,sans-serif" font-size="10" font-weight="bold" fill="#3c4151" textLength="13">2D</text><path d="M2 2l5 6" fill="none" stroke="#3a62c8" stroke-width="1.4" /></svg>
<div class="sep" style="left:930.5px;top:75.5px"></div>
<svg class="abs" style="left:936.3px;top:76.5px" width="16.4" height="16.4" viewBox="0 0 16 16"><path d="M1.500 5.500h9v9h-9zM5.500 1.500h9v9h-9zM1.500 5.500l4-4M10.500 5.500l4-4M1.500 14.500l4-4M10.500 14.500l4-4" fill="none" stroke="#3c4151" stroke-width="1.1" /></svg>
<div class="tog" style="left:957.5px;top:75px;width:20.5px;height:19.5px"></div>
<svg class="abs" style="left:958.8px;top:76.5px" width="16.4" height="16.4" viewBox="0 0 16 16"><rect x="1.5" y="1.5" width="13" height="13" fill="#c0c0c0" stroke="#3c4151" stroke-width="1.3"/><rect x="4.5" y="4.5" width="7" height="7" fill="#d8d8d8" stroke="#3c4151" stroke-width="1.2"/><path d="M1.500 1.500l3 3M14.500 1.500l-3 3M1.500 14.500l3-3M14.500 14.500l-3-3" fill="none" stroke="#3c4151" stroke-width="1.1" /></svg>
<svg class="abs" style="left:981.8px;top:76.5px" width="16.4" height="16.4" viewBox="0 0 16 16"><path d="M1.500 9l2.500-2.500h5v5.500l-2.500 2.500h-5z" fill="#62a0ea" stroke="#3c4151" stroke-width="1.2" /><path d="M1.500 9h5v5.500M6.500 9l2.500-2.500" fill="none" stroke="#3c4151" stroke-width="1.1" /><path d="M4 6.500h5v5" fill="none" stroke="#ffc000" stroke-width="1.2" /><path d="M12 0.2999999999999998v6.4M8.8 3.5h6.4M9.7 1.2l4.5 4.5M14.3 1.2l-4.5 4.5" fill="none" stroke="#ffb400" stroke-width="1.5" /><circle cx="12" cy="3.5" r="2" fill="#ffb400" stroke="none" stroke-width="0"/></svg>
<div class="sep" style="left:1005.5px;top:75.5px"></div>
<svg class="abs" style="left:1011.3px;top:76.5px" width="16.4" height="16.4" viewBox="0 0 16 16"><circle cx="5" cy="11" r="3.6" fill="none" stroke="#e8604c" stroke-width="1.4"/><path d="M9 1.500l6 6m0-6l-6 6" fill="none" stroke="#e8604c" stroke-width="1.4" /></svg>
<svg class="abs" style="left:1033.8px;top:76.5px" width="16.4" height="16.4" viewBox="0 0 16 16"><path d="M6 0.500v9.500" fill="none" stroke="#62a0ea" stroke-width="1.3" /><path d="M6 10h10" fill="none" stroke="#70ad47" stroke-width="1.3" /><path d="M6 10l-5 5" fill="none" stroke="#e8604c" stroke-width="1.3" /></svg>
<div class="sep" style="left:1057.5px;top:75.5px"></div>
<svg class="abs" style="left:1063.8px;top:76.5px" width="16.4" height="16.4" viewBox="0 0 16 16"><path d="M1.500 5.500l3-4h10v9l-3 4h-10z" fill="#62a0ea" stroke="#3c4151" stroke-width="1.3" /><rect x="1.5" y="5.5" width="10" height="9" fill="#fff" stroke="#3c4151" stroke-width="1.3"/><path d="M11.500 5.500l3-4" fill="none" stroke="#3c4151" stroke-width="1.2" /><rect x="3.5" y="7.5" width="6" height="5" fill="none" stroke="#3c4151" stroke-width="1"/><path d="M5.500 12.500v-3h2v3" fill="none" stroke="#3c4151" stroke-width="1" /></svg>
<div class="tog" style="left:1084.5px;top:75px;width:20.5px;height:19.5px"></div>
<svg class="abs" style="left:1086.3px;top:76.5px" width="16.4" height="16.4" viewBox="0 0 16 16"><path d="M2.500 1.500h7l4 4v9h-11z" fill="#fff" stroke="#3c4151" stroke-width="1.3" /><path d="M9.500 1.500v4h4" fill="none" stroke="#3c4151" stroke-width="1" /><path d="M4.500 10a3 3 0 0 1 6 0h-2.500l-1.500 1.500z" fill="#f0a000" stroke="none" stroke-width="0" /><circle cx="10" cy="11.5" r="2.2" fill="#fff" stroke="#62a0ea" stroke-width="1.4"/></svg>
<svg class="abs" style="left:1108.8px;top:76.5px" width="16.4" height="16.4" viewBox="0 0 16 16"><path d="M8 1.500v13M1.500 8h13" fill="none" stroke="#d0d0d0" stroke-width="1.4" /><path d="M5.500 4l2.500-3 2.500 3zM5.500 12l2.500 3 2.500-3zM4 5.500l-3 2.500 3 2.500zM12 5.500l3 2.500-3 2.500z" fill="#d0d0d0" stroke="none" stroke-width="0" /></svg>
<div class="dd" style="left:1130.5px;top:89.0px"></div>
<div class="grip" style="left:1144px;top:78px;height:14px"></div>
<div class="tog" style="left:1150px;top:75px;width:21px;height:19.5px"></div>
<svg class="abs" style="left:1151.8px;top:76.5px" width="16.4" height="16.4" viewBox="0 0 16 16"><path d="M2 1.500v5M14 1.500v5M2 4h12M5 9.500v5M14 9.500v5M5 12h9" fill="none" stroke="#3c4151" stroke-width="1.1" /><path d="M3.500 2.800l-1.500 1.200 1.500 1.200M12.500 2.800l1.500 1.200-1.500 1.200M6.500 10.800l-1.500 1.200 1.500 1.200M12.500 10.800l1.500 1.200-1.500 1.200" fill="none" stroke="#3c4151" stroke-width="1" /><path d="M2 7.500h12" fill="none" stroke="#62a0ea" stroke-width="1.2" /><path d="M5 15.500h9" fill="none" stroke="#e8604c" stroke-width="1.2" /></svg>
<div class="sep" style="left:1175.5px;top:75.5px"></div>
<svg class="abs" style="left:1186px;top:75px;" width="8" height="20" viewBox="0 0 8 20"><path d="M0.500 2.500l2.500 2-2.500 2M4 2.500l2.500 2-2.500 2" fill="none" stroke="#777" stroke-width="1"/><path d="M1.500 14h6l-3 3z" fill="#666"/></svg>
<div class="abs" style="left:253px;top:76.5px;width:59.5px;height:16.0px;background:#fff;border:1px solid #c6c6c6"></div><div class="abs" style="left:256.0px;top:79px;font:9.5px 'Liberation Sans',sans-serif;letter-spacing:0px;color:#333;white-space:nowrap;line-height:11px;">0 mm</div>
<div class="abs" style="left:297.5px;top:76.5px;width:15px;height:16px;background:#e4e4e4;border:1px solid #c0c0c0"></div><svg class="abs" style="left:297.5px;top:76.5px;" width="15" height="16" viewBox="0 0 15 16"><path d="M1 8.0h13" stroke="#c0c0c0" stroke-width="1"/><path d="M5.0 5.5h5l-2.500-3zM5.0 10.5h5l-2.500 3z" fill="#333"/></svg>
<div class="grip" style="left:6px;top:103px;height:14px"></div>
<svg class="abs" style="left:14.3px;top:101.8px" width="16.4" height="16.4" viewBox="0 0 16 16"><rect x="0" y="0.5" width="7.2" height="6.2" fill="#62a0ea" stroke="none" stroke-width="0"/><path d="M8 4h4v5" fill="none" stroke="#3c4151" stroke-width="1.2"  stroke-dasharray="1.200 1"/><rect x="9.8" y="9.6" width="5.6" height="5.6" fill="#fff" stroke="#3c4151" stroke-width="1.1"/></svg>
<svg class="abs" style="left:36.8px;top:101.8px" width="16.4" height="16.4" viewBox="0 0 16 16"><rect x="1" y="0.5" width="7" height="6.2" fill="#62a0ea" stroke="none" stroke-width="0"/><path d="M9 4h4v4" fill="none" stroke="#3c4151" stroke-width="1.2"  stroke-dasharray="1.200 1"/><text x="1.5" y="15.5" font-family="Liberation Sans,sans-serif" font-size="7.5" font-weight="bold" fill="#3c4151" >A</text><rect x="10" y="10" width="5.2" height="5.2" fill="#ffc000" stroke="#3c4151" stroke-width="1.1"/></svg>
<svg class="abs" style="left:59.3px;top:101.8px" width="16.4" height="16.4" viewBox="0 0 16 16"><path d="M1 6.500h14M1 10h14" fill="none" stroke="#3c4151" stroke-width="1.3" /></svg>
<svg class="abs" style="left:81.8px;top:101.8px" width="16.4" height="16.4" viewBox="0 0 16 16"><rect x="0" y="0.5" width="7.2" height="6.2" fill="#62a0ea" stroke="none" stroke-width="0"/><path d="M8 2.500h5.500M8 5.500h5.500M9.500 2v7M12 2v7" fill="none" stroke="#3c4151" stroke-width="1.2"  stroke-dasharray="1.200 1"/><rect x="9.8" y="9.6" width="5.6" height="5.6" fill="#fff" stroke="#3c4151" stroke-width="1.1"/></svg>
<svg class="abs" style="left:104.3px;top:101.8px" width="16.4" height="16.4" viewBox="0 0 16 16"><rect x="1" y="1.5" width="5" height="4.5" fill="#c8c8c8" stroke="none" stroke-width="0"/><path d="M6 4h3c3 0 3 4 0 4h-3c-3 0-3 4.500 0 4.500h4" fill="none" stroke="#c4c4c4" stroke-width="1.2" /><rect x="10.5" y="10.5" width="4.5" height="4.5" fill="#fff" stroke="#c4c4c4" stroke-width="1.1"/></svg>
<svg class="abs" style="left:126.8px;top:101.8px" width="16.4" height="16.4" viewBox="0 0 16 16"><rect x="2" y="1.5" width="3.5" height="3.5" fill="#fff" stroke="#3c4151" stroke-width="1.1"/><rect x="2" y="11" width="3.5" height="3.5" fill="#fff" stroke="#3c4151" stroke-width="1.1"/><rect x="10.5" y="1.5" width="3.5" height="3.5" fill="#fff" stroke="#3c4151" stroke-width="1.1"/><rect x="10.5" y="11" width="3.5" height="3.5" fill="#fff" stroke="#3c4151" stroke-width="1.1"/><path d="M3.750 5.500v5M12.250 5.500v5" fill="none" stroke="#3c4151" stroke-width="1.2"  stroke-dasharray="1.200 1"/></svg>
<svg class="abs" style="left:149.3px;top:101.8px" width="16.4" height="16.4" viewBox="0 0 16 16"><rect x="1" y="2" width="3.5" height="3.5" fill="#fff" stroke="#3c4151" stroke-width="1.1"/><rect x="1" y="10.5" width="3.5" height="3.5" fill="#fff" stroke="#3c4151" stroke-width="1.1"/><rect x="11.5" y="2" width="3.5" height="3.5" fill="#fff" stroke="#3c4151" stroke-width="1.1"/><rect x="11.5" y="10.5" width="3.5" height="3.5" fill="#fff" stroke="#3c4151" stroke-width="1.1"/><path d="M5 3.750h6M5 12.250h6" fill="none" stroke="#3c4151" stroke-width="1.2"  stroke-dasharray="1.200 1"/></svg>
<svg class="abs" style="left:172.3px;top:101.8px" width="16.4" height="16.4" viewBox="0 0 16 16"><path d="M0.500 1.500h5c3 0 4.400 2 4.400 5v9M15.500 1.500h-6" fill="none" stroke="#b8b8b8" stroke-width="1.2" /></svg>
<svg class="abs" style="left:194.8px;top:101.8px" width="16.4" height="16.4" viewBox="0 0 16 16"><path d="M0.500 1.500h4.700v14M15.500 1.500h-5c-4 0-5.300 3-5.300 6" fill="none" stroke="#b8b8b8" stroke-width="1.2" /></svg>
<div class="sep" style="left:218px;top:100.5px"></div>
<div class="sep" style="left:431px;top:100.5px"></div>
<div class="tog" style="left:435.5px;top:100px;width:20.5px;height:19.5px"></div>
<svg class="abs" style="left:437.3px;top:101.8px" width="16.4" height="16.4" viewBox="0 0 16 16"><path d="M5.7 1l-0.8 8M8.5 1l-0.8 8M3.3 3.6h7M3.0 6.4h7" fill="none" stroke="#3c4151" stroke-width="1.1" /><path d="M2 13.500h12" fill="none" stroke="#62a0ea" stroke-width="1.2" /></svg>
<svg class="abs" style="left:459.8px;top:101.8px" width="16.4" height="16.4" viewBox="0 0 16 16"><path d="M6.3 0.5l-0.7 7M8.7 0.5l-0.7 7M4.3 2.8h6M4.0 5.3h6" fill="none" stroke="#c4c4c4" stroke-width="1.1" /><path d="M1 12.500h14M4 9l8 6.500M7 8v4.500" fill="none" stroke="#c4c4c4" stroke-width="1.1" /></svg>
<svg class="abs" style="left:482.3px;top:101.8px" width="16.4" height="16.4" viewBox="0 0 16 16"><path d="M4.3 0.5l-0.7 7M6.7 0.5l-0.7 7M2.3 2.8h6M2.0 5.3h6" fill="none" stroke="#c4c4c4" stroke-width="1.1" /><path d="M1 14.500l14-12.500M4 7l11 8" fill="none" stroke="#c4c4c4" stroke-width="1.1" /></svg>
<div class="sep" style="left:506.5px;top:100.5px"></div>
<div class="tog" style="left:510.5px;top:100px;width:20.5px;height:19.5px"></div>
<svg class="abs" style="left:511.8px;top:101.8px" width="16.4" height="16.4" viewBox="0 0 16 16"><path d="M4 1v14" fill="none" stroke="#ffc000" stroke-width="1.6" /><path d="M4 1v14" fill="none" stroke="#70ad47" stroke-width="1"  stroke-dasharray="2 2"/><path d="M4 4.500h7.500v5" fill="none" stroke="#ffc000" stroke-width="1.5" /><path d="M4 4.500h7.500v5" fill="none" stroke="#70ad47" stroke-width="1"  stroke-dasharray="2 2"/><circle cx="4" cy="4.5" r="1.5" fill="#3c4151" stroke="none" stroke-width="0"/><rect x="9.6" y="9.6" width="5.6" height="5.6" fill="#fff" stroke="#3c4151" stroke-width="1.1"/></svg>
<svg class="abs" style="left:534.3px;top:101.8px" width="16.4" height="16.4" viewBox="0 0 16 16"><path d="M1 5h4c2 0 3-2 5-2M1 13h4c2 0 3-2 5-2" fill="none" stroke="#70ad47" stroke-width="1.4" /><path d="M11 3h4v8h-4" fill="none" stroke="#62a0ea" stroke-width="1.2" /><path d="M13 1l-2.500 2 2.500 2zM13 9l-2.500 2 2.500 2z" fill="#62a0ea" stroke="none" stroke-width="0" /></svg>
<svg class="abs" style="left:556.8px;top:101.8px" width="16.4" height="16.4" viewBox="0 0 16 16"><rect x="1" y="1" width="3.5" height="3.5" fill="#fff" stroke="#3c4151" stroke-width="1.1"/><rect x="1" y="11.5" width="3.5" height="3.5" fill="#fff" stroke="#3c4151" stroke-width="1.1"/><rect x="11.5" y="1" width="3.5" height="3.5" fill="#fff" stroke="#3c4151" stroke-width="1.1"/><rect x="11.5" y="11.5" width="3.5" height="3.5" fill="#fff" stroke="#3c4151" stroke-width="1.1"/><path d="M4.500 2.750h7M4.500 13.250h7M2.750 4.500v7M13.250 4.500v7" fill="none" stroke="#3c4151" stroke-width="1.1"  stroke-dasharray="1.500 1"/><path d="M5 5l6 6M5 8h-1.500M5 5v3" fill="none" stroke="#62a0ea" stroke-width="1.2" /></svg>
<svg class="abs" style="left:579.3px;top:101.8px" width="16.4" height="16.4" viewBox="0 0 16 16"><rect x="0" y="0.5" width="7.2" height="6.2" fill="#62a0ea" stroke="none" stroke-width="0"/><path d="M7 4h5v5" fill="none" stroke="#e07050" stroke-width="1.4" /><rect x="9.8" y="9.6" width="5.6" height="5.6" fill="#fff" stroke="#3c4151" stroke-width="1.1"/></svg>
<svg class="abs" style="left:601.8px;top:101.8px" width="16.4" height="16.4" viewBox="0 0 16 16"><path d="M1 8h4M11 8h4" fill="none" stroke="#3c4151" stroke-width="1.3" /><circle cx="6" cy="8" r="1.6" fill="none" stroke="#3c4151" stroke-width="1"/><path d="M12 6.500l-2 1.500 2 1.500z" fill="#3c4151" stroke="none" stroke-width="0" /><path d="M6 5.500l4 5m0-5l-4 5" fill="none" stroke="#f04030" stroke-width="1.2" /></svg>
<svg class="abs" style="left:624.3px;top:101.8px" width="16.4" height="16.4" viewBox="0 0 16 16"><rect x="0.5" y="0.5" width="15" height="15" fill="none" stroke="#a9ccf5" stroke-width="1" stroke-dasharray="1.500 1.500"/><path d="M7.3 3l-0.7 7M9.7 3l-0.7 7M5.3 5.3h6M5.0 7.8h6" fill="none" stroke="#3c4151" stroke-width="1" /><path d="M6 12.500h8" fill="none" stroke="#a9ccf5" stroke-width="1.2" /></svg>
<div class="dd" style="left:646.5px;top:114.0px"></div>
<div class="grip" style="left:660px;top:103px;height:14px"></div>
<svg class="abs" style="left:776.3px;top:101.8px" width="16.4" height="16.4" viewBox="0 0 16 16"><rect x="0" y="1.5" width="7" height="6.2" fill="#62a0ea" stroke="none" stroke-width="0"/><rect x="9" y="1" width="6" height="3" fill="#d09040" stroke="#8a5a20" stroke-width="0.8"/><path d="M7 5h4.500v5" fill="none" stroke="#3c4151" stroke-width="1.2"  stroke-dasharray="1.200 1"/><rect x="9.8" y="9.8" width="5.4" height="5.4" fill="#ffc000" stroke="#3c4151" stroke-width="1.1"/></svg>
<svg class="abs" style="left:799.3px;top:101.8px" width="16.4" height="16.4" viewBox="0 0 16 16"><rect x="4" y="1" width="9" height="5" fill="#c0c0c0" stroke="none" stroke-width="0"/><path d="M8.500 6v6M6.500 9.500l2 2.500 2-2.500M1 13.500h15" fill="none" stroke="#c8c8c8" stroke-width="1.3" /></svg>
<div class="dd" style="left:820.5px;top:114.0px"></div>
<div class="grip" style="left:834px;top:103px;height:14px"></div>
<svg class="abs" style="left:950.3px;top:101.8px" width="16.4" height="16.4" viewBox="0 0 16 16"><rect x="0" y="1.5" width="7" height="6.2" fill="#62a0ea" stroke="none" stroke-width="0"/><rect x="9" y="1" width="6" height="2.5" fill="#fff" stroke="#3c4151" stroke-width="1" rx="1.2"/><path d="M7 5h4.500v5" fill="none" stroke="#3c4151" stroke-width="1.2"  stroke-dasharray="1.200 1"/><rect x="9.8" y="9.8" width="5.4" height="5.4" fill="#ffc000" stroke="#3c4151" stroke-width="1.1"/></svg>
<svg class="abs" style="left:973.3px;top:101.8px" width="16.4" height="16.4" viewBox="0 0 16 16"><rect x="3" y="1.5" width="10" height="3" fill="#fff" stroke="#c8c8c8" stroke-width="1.2" rx="1.5"/><path d="M8 4.500v7M6 9l2 2.500 2-2.500M1 13.500h14" fill="none" stroke="#d0d0d0" stroke-width="1.3" /></svg>
<div class="dd" style="left:994.5px;top:114.0px"></div>
<div class="grip" style="left:1008px;top:103px;height:14px"></div>
<svg class="abs" style="left:1124.3px;top:101.8px" width="16.4" height="16.4" viewBox="0 0 16 16"><rect x="0" y="1.5" width="7" height="6.2" fill="#62a0ea" stroke="none" stroke-width="0"/><path d="M8 1c1 3 5 3 7 0" fill="none" stroke="#70ad47" stroke-width="1.3" /><path d="M7 5h4.500v5" fill="none" stroke="#3c4151" stroke-width="1.2"  stroke-dasharray="1.200 1"/><rect x="9.8" y="9.8" width="5.4" height="5.4" fill="#ffc000" stroke="#3c4151" stroke-width="1.1"/></svg>
<svg class="abs" style="left:1146.8px;top:101.8px" width="16.4" height="16.4" viewBox="0 0 16 16"><path d="M1 1c2 5 12 5 14 0" fill="none" stroke="#70ad47" stroke-width="1.3" /><path d="M8 5v6" fill="none" stroke="#62a0ea" stroke-width="1.6" /><path d="M5.500 9l2.500 3.500 2.500-3.500z" fill="#62a0ea" stroke="none" stroke-width="0" /><path d="M1 14h14" fill="none" stroke="#62a0ea" stroke-width="1.3" /></svg>
<svg class="abs" style="left:1186px;top:100px;" width="8" height="20" viewBox="0 0 8 20"><path d="M0.500 2.500l2.500 2-2.500 2M4 2.500l2.500 2-2.500 2" fill="none" stroke="#777" stroke-width="1"/><path d="M1.500 14h6l-3 3z" fill="#666"/></svg>
<div class="abs" style="left:226.500px;top:113.500px;width:15.500px;height:4.500px;background:#000"></div>
<div class="dd" style="left:248px;top:109px"></div>
<div class="abs" style="left:258px;top:100.5px;width:59px;height:17.5px;background:#fff;border:1px solid #c6c6c6"></div><div class="abs" style="left:260.5px;top:104px;font:9.5px 'Liberation Sans',sans-serif;letter-spacing:0px;color:#333;white-space:nowrap;line-height:11px;">0.1 mm</div>
<div class="abs" style="left:301.5px;top:100.5px;width:15.5px;height:17.5px;background:#e4e4e4;border:1px solid #c0c0c0"></div><svg class="abs" style="left:301.5px;top:100.5px;" width="15.5" height="17.5" viewBox="0 0 15.5 17.5"><path d="M1 8.75h13.5" stroke="#c0c0c0" stroke-width="1"/><path d="M5.25 6.25h5l-2.500-3zM5.25 11.25h5l-2.500 3z" fill="#333"/></svg>
<div class="abs" style="left:321.5px;top:100.5px;width:104.0px;height:17.5px;background:#fff;border:1px solid #c6c6c6"></div><div class="dd" style="left:415.5px;top:108.0px"></div>
<div class="abs" style="left:327px;top:107.500px;width:80px;height:1.500px;background:#222"></div>
<div class="abs" style="left:667px;top:100.5px;width:105px;height:17.5px;background:#fff;border:1px solid #c6c6c6"></div><div class="dd" style="left:762px;top:108.0px"></div>
<div class="abs" style="left:841px;top:100.5px;width:105px;height:17.5px;background:#fff;border:1px solid #c6c6c6"></div><div class="dd" style="left:936px;top:108.0px"></div>
<div class="abs" style="left:1015px;top:100.5px;width:105px;height:17.5px;background:#fff;border:1px solid #c6c6c6"></div><div class="dd" style="left:1110px;top:108.0px"></div>
<div class="abs" style="left:1019.0px;top:105px;font:9.5px 'Liberation Sans',sans-serif;letter-spacing:0px;color:#333;white-space:nowrap;line-height:11px;">H07V-K</div>
<div class="abs" style="left:1px;top:123px;width:186px;height:258px;background:#e6e6e6;"></div>
<div class="abs" style="left:6.7px;top:131px;font:16px 'Liberation Sans',sans-serif;letter-spacing:0.10px;color:#626872;white-space:nowrap;line-height:17px;">Sheet</div>
<svg class="abs" style="left:135.7px;top:137.0px;" width="8" height="5" viewBox="0 0 8 5"><path d="M0 0h7.400l-3.700 4.400z" fill="#666"/></svg><svg class="abs" style="left:152px;top:133.5px;" width="9" height="10" viewBox="0 0 9 10"><path d="M2.500 1h4M3 1v4.500M6 1v4.500M1.500 5.500h6M4.500 5.500v4" fill="none" stroke="#666" stroke-width="1.100"/></svg><svg class="abs" style="left:169px;top:134.0px;" width="9" height="9" viewBox="0 0 9 9"><path d="M1 1l7 7m0-7l-7 7" stroke="#666" stroke-width="1.300" fill="none"/></svg>
<div class="abs" style="left:3.5px;top:154px;width:180px;height:192px;background:#fff;"></div>
<div class="abs" style="left:3.5px;top:346px;width:180px;height:13px;background:#ececec;"></div>
<div class="abs" style="left:8.3px;top:158px;font:10px 'Liberation Sans',sans-serif;letter-spacing:-0.38px;color:#222;white-space:nowrap;line-height:11px;">Sheet</div>
<div class="abs" style="left:143.400px;top:156px;width:39.600px;height:14px;overflow:hidden"><div class="abs" style="left:0.0px;top:2px;font:10px 'Liberation Sans',sans-serif;letter-spacing:-0.42px;color:#222;white-space:nowrap;line-height:11px;">Info column</div></div>
<div class="abs" style="left:137.2px;top:154px;width:1px;height:89px;background:#b8b8b8;"></div>
<div class="abs" style="left:3.5px;top:243px;width:180px;height:1px;background:#c4c4c4;"></div>
<div class="abs" style="left:37.7px;top:172px;width:145.3px;height:14.5px;background:#dcdcdc;"></div>
<div class="abs" style="left:137.2px;top:172px;width:1px;height:14.5px;background:#b0b0b0;"></div>
<div class="abs" style="left:14px;top:179.5px;width:7px;height:1px;background-image:linear-gradient(90deg,#bbb 50%,transparent 50%);background-size:2px 1px"></div>
<div class="abs" style="left:28px;top:186px;width:1px;height:23px;background-image:linear-gradient(180deg,#bbb 50%,transparent 50%);background-size:1px 2px"></div>
<div class="abs" style="left:32px;top:194px;width:7px;height:1px;background-image:linear-gradient(90deg,#bbb 50%,transparent 50%);background-size:2px 1px"></div>
<div class="abs" style="left:32px;top:208.5px;width:7px;height:1px;background-image:linear-gradient(90deg,#bbb 50%,transparent 50%);background-size:2px 1px"></div>
<div class="abs" style="left:46px;top:215px;width:1px;height:21px;background-image:linear-gradient(180deg,#bbb 50%,transparent 50%);background-size:1px 2px"></div>
<div class="abs" style="left:46px;top:221.5px;width:12px;height:1px;background-image:linear-gradient(90deg,#bbb 50%,transparent 50%);background-size:2px 1px"></div>
<div class="abs" style="left:46px;top:236px;width:12px;height:1px;background-image:linear-gradient(90deg,#bbb 50%,transparent 50%);background-size:2px 1px"></div>
<svg class="abs" style="left:6.0px;top:175.0px;" width="9" height="9" viewBox="0 0 9 9"><rect x="0.500" y="0.500" width="8" height="8" fill="#fff" stroke="#b4b4b4" stroke-width="1"/><path d="M2.500 4.500h4" stroke="#4a5a80" stroke-width="1"/></svg>
<svg class="abs" style="left:20.5px;top:173px;" width="15" height="13" viewBox="0 0 15 13"><rect x="1" y="1" width="8" height="8" rx="1" fill="#fff" stroke="#3c4151" stroke-width="1"/><rect x="3" y="2.500" width="8" height="8" rx="1" fill="#fff" stroke="#3c4151" stroke-width="1"/><rect x="5.500" y="4" width="8.500" height="8" rx="2" fill="#fff" stroke="#3c4151" stroke-width="1.200"/></svg>
<div class="abs" style="left:41.3px;top:174px;font:bold 10.5px 'Liberation Sans',sans-serif;letter-spacing:0.21px;color:#111;white-space:nowrap;line-height:12px;">UseCase1_Mou...</div>
<svg class="abs" style="left:24.0px;top:189.5px;" width="9" height="9" viewBox="0 0 9 9"><rect x="0.500" y="0.500" width="8" height="8" fill="#fff" stroke="#b4b4b4" stroke-width="1"/><path d="M2.500 4.500h4" stroke="#4a5a80" stroke-width="1"/><path d="M4.500 2.500v4" stroke="#4a5a80" stroke-width="1"/></svg>
<svg class="abs" style="left:39px;top:187.5px;" width="14" height="12" viewBox="0 0 14 12"><path d="M0.800 3.500v-2.500h4.200l1.200 2h5.800v1" fill="#fff" stroke="#3c4151" stroke-width=".9"/><rect x="0.500" y="3.500" width="11.500" height="8.500" fill="#ffc000"/><path d="M12.300 3.500v8.800h-12" fill="none" stroke="#3c4151" stroke-width="1"/></svg>
<div class="abs" style="left:59.0px;top:189px;font:10px 'Liberation Sans',sans-serif;letter-spacing:-0.32px;color:#222;white-space:nowrap;line-height:11px;">01-circuit diagram</div>
<svg class="abs" style="left:24.0px;top:204.0px;" width="9" height="9" viewBox="0 0 9 9"><rect x="0.500" y="0.500" width="8" height="8" fill="#fff" stroke="#b4b4b4" stroke-width="1"/><path d="M2.500 4.500h4" stroke="#4a5a80" stroke-width="1"/></svg>
<svg class="abs" style="left:39px;top:202px;" width="14" height="12" viewBox="0 0 14 12"><path d="M1 11.500v-10h4l1 1.500h5v2" fill="#fff" stroke="#3c4151" stroke-width="1"/><path d="M1 11.500l2-6.500h10l-2 6.500z" fill="#ffc000" stroke="#b88a00" stroke-width=".8"/></svg>
<div class="abs" style="left:59.0px;top:204px;font:10px 'Liberation Sans',sans-serif;letter-spacing:-0.37px;color:#222;white-space:nowrap;line-height:11px;">02-Panel layout</div>
<svg class="abs" style="left:59px;top:217px;" width="10" height="10" viewBox="0 0 10 10"><rect x="0.500" y="0.500" width="9" height="9" fill="#fff" stroke="#555" stroke-width="1"/><path d="M2 4.500l2.500 3 4-6" fill="none" stroke="#e03020" stroke-width="1.800"/></svg>
<svg class="abs" style="left:71px;top:217px;" width="15" height="10" viewBox="0 0 15 10"><path d="M0.500 0.500h14v6.500l-2.500 2.500h-11.500z" fill="#f4f4f4" stroke="#3c4151" stroke-width="1"/><path d="M14.500 7h-2.500v2.500" fill="none" stroke="#3c4151" stroke-width=".8"/><text x="2.500" y="8" font-family="Liberation Sans,sans-serif" font-size="8" fill="#333">P</text></svg>
<div class="abs" style="left:91.5px;top:217px;font:10.5px 'Liberation Sans',sans-serif;letter-spacing:0px;color:#222;white-space:nowrap;line-height:12px;">1</div>
<svg class="abs" style="left:59px;top:231.5px;" width="10" height="10" viewBox="0 0 10 10"><rect x="0.500" y="0.500" width="9" height="9" fill="#fff" stroke="#555" stroke-width="1"/></svg>
<svg class="abs" style="left:71px;top:231.5px;" width="15" height="10" viewBox="0 0 15 10"><path d="M0.500 0.500h14v6.500l-2.500 2.500h-11.500z" fill="#f4f4f4" stroke="#3c4151" stroke-width="1"/><path d="M14.500 7h-2.500v2.500" fill="none" stroke="#3c4151" stroke-width=".8"/><text x="2.500" y="8" font-family="Liberation Sans,sans-serif" font-size="8" fill="#333">V</text></svg>
<div class="abs" style="left:91.5px;top:231px;font:10.5px 'Liberation Sans',sans-serif;letter-spacing:0px;color:#222;white-space:nowrap;line-height:12px;">2</div>
<div class="abs" style="left:18px;top:352.3px;width:100px;height:1.6px;background:#7a7a7a;"></div>
<div class="abs" style="left:3.5px;top:359px;width:34.5px;height:20px;background:#fff;"></div>
<div class="abs" style="left:3.5px;top:376.3px;width:34.5px;height:2.7px;background:#bcd2f2;"></div>
<div class="abs" style="left:22.5px;top:363px;font:10px 'Liberation Sans',sans-serif;letter-spacing:-0.63px;color:#666;white-space:nowrap;line-height:11px;">S...</div>
<div class="abs" style="left:57.3px;top:363px;font:10px 'Liberation Sans',sans-serif;letter-spacing:-0.17px;color:#666;white-space:nowrap;line-height:11px;">P...</div>
<div class="abs" style="left:39.6px;top:376.3px;width:31.4px;height:2.5px;background:#a9cf90;"></div>
<div class="abs" style="left:92.6px;top:363px;font:10px 'Liberation Sans',sans-serif;letter-spacing:-0.17px;color:#666;white-space:nowrap;line-height:11px;">P...</div>
<div class="abs" style="left:74.7px;top:376.3px;width:31.299999999999997px;height:2.5px;background:#f2a598;"></div>
<div class="abs" style="left:128.6px;top:363px;font:10px 'Liberation Sans',sans-serif;letter-spacing:-0.31px;color:#666;white-space:nowrap;line-height:11px;">F...</div>
<div class="abs" style="left:110px;top:376.3px;width:31.19999999999999px;height:2.5px;background:#a8b8c2;"></div>
<div class="abs" style="left:163.4px;top:363px;font:10px 'Liberation Sans',sans-serif;letter-spacing:-0.59px;color:#666;white-space:nowrap;line-height:11px;">D..</div>
<div class="abs" style="left:144.9px;top:376.3px;width:31.599999999999994px;height:2.5px;background:#a9c2e2;"></div>
<svg class="abs" style="left:8px;top:360px;" width="12" height="15" viewBox="0 0 12 15"><rect x="0.700" y="0.700" width="7" height="9" fill="#fff" stroke="#222" stroke-width="1"/><rect x="2.500" y="2.500" width="7" height="9" fill="#fff" stroke="#222" stroke-width="1"/><path d="M4.500 4.500h4l2.500 2.500v6.500h-6.500z" fill="#fff" stroke="#222" stroke-width="1.200"/></svg>
<svg class="abs" style="left:43.5px;top:360px;" width="12" height="15" viewBox="0 0 12 15"><path d="M0.700 4.500l3-3h7.500v8.500l-3 3.500h-7.500z" fill="#18a018" stroke="#111" stroke-width="1.100"/><path d="M0.700 4.500h7.500v9M8.200 4.500l3-3" fill="none" stroke="#111" stroke-width="1"/><rect x="1.500" y="5.500" width="6" height="7.500" fill="#20d020"/><circle cx="3" cy="7" r=".7" fill="#e02020"/><circle cx="6.500" cy="7" r=".7" fill="#e02020"/><circle cx="3" cy="11.500" r=".7" fill="#e02020"/><circle cx="6.500" cy="11.500" r=".7" fill="#e02020"/></svg>
<svg class="abs" style="left:78.8px;top:360px;" width="12" height="15" viewBox="0 0 12 15"><path d="M0.700 4.500l3-3h7.500v8.500l-3 3.500h-7.500z" fill="#d89800" stroke="#111" stroke-width="1.100"/><path d="M0.700 4.500h7.500v9M8.200 4.500l3-3" fill="none" stroke="#111" stroke-width="1"/><rect x="1.500" y="5.500" width="6" height="7.500" fill="#ffc000"/><circle cx="3" cy="7" r=".7" fill="#e02020"/><circle cx="6.500" cy="7" r=".7" fill="#e02020"/><circle cx="3" cy="11.500" r=".7" fill="#e02020"/><circle cx="6.500" cy="11.500" r=".7" fill="#e02020"/></svg>
<svg class="abs" style="left:111px;top:360px;" width="16" height="15" viewBox="0 0 16 15"><path d="M2.500 14.500v-9.500a2.500 2.500 0 0 1 5 0v5.500a2.500 2.500 0 0 0 5 0v-9.500" fill="none" stroke="#0a500a" stroke-width="4.400"/><path d="M2.500 14v-9a2.500 2.500 0 0 1 5 0v5.500a2.500 2.500 0 0 0 5 0v-9" fill="none" stroke="#10e010" stroke-width="2.600"/></svg>
<svg class="abs" style="left:146px;top:360px;" width="16" height="15" viewBox="0 0 16 15"><path d="M2.700 1v13.500l9-11.500v12" fill="none" stroke="#0a500a" stroke-width="4.400" stroke-linejoin="miter"/><path d="M2.700 1.500v12l9-11v11.500" fill="none" stroke="#10e010" stroke-width="2.600"/></svg>
<div class="abs" style="left:3.5px;top:380.4px;width:180px;height:5.4px;background:#d2d2d2;"></div>
<div class="abs" style="left:1px;top:386px;width:186px;height:31px;background:#e4e4e4;"></div>
<div class="abs" style="left:1px;top:417px;width:186px;height:261px;background:#ececec;"></div>
<div class="abs" style="left:183px;top:123px;width:3.2px;height:548.7px;background:#f0f0f0;"></div>
<div class="abs" style="left:186.2px;top:123px;width:1.4px;height:548.7px;background:#d8d8d8;"></div>
<div class="abs" style="left:187.6px;top:123px;width:2.4px;height:548.7px;background:#e6e6e6;"></div>
<div class="abs" style="left:6.7px;top:393px;font:16px 'Liberation Sans',sans-serif;letter-spacing:0.80px;color:#626872;white-space:nowrap;line-height:17px;">Component</div>
<svg class="abs" style="left:135.7px;top:400.0px;" width="8" height="5" viewBox="0 0 8 5"><path d="M0 0h7.400l-3.700 4.400z" fill="#666"/></svg><svg class="abs" style="left:152px;top:396.5px;" width="9" height="10" viewBox="0 0 9 10"><path d="M2.500 1h4M3 1v4.500M6 1v4.500M1.500 5.500h6M4.500 5.500v4" fill="none" stroke="#666" stroke-width="1.100"/></svg><svg class="abs" style="left:169px;top:397.0px;" width="9" height="9" viewBox="0 0 9 9"><path d="M1 1l7 7m0-7l-7 7" stroke="#666" stroke-width="1.300" fill="none"/></svg>
<div class="abs" style="left:11.5px;top:432px;font:10px 'Liberation Sans',sans-serif;letter-spacing:-0.41px;color:#222;white-space:nowrap;line-height:11px;">Component name</div>
<div class="abs" style="left:94.2px;top:426.5px;width:88.8px;height:17.5px;background:#fff;border:1px solid #a8a8a8;border-right:none;border-radius:2px 0 0 2px"></div>
<div class="abs" style="left:96.4px;top:431px;font:10px 'Liberation Sans',sans-serif;letter-spacing:-0.50px;color:#222;white-space:nowrap;line-height:11px;">&lt;All&gt;</div>
<div class="abs" style="left:125.6px;top:451.3px;width:57.4px;height:15.2px;background:#f6f6f6;border:1px solid #d2d2d2;border-right:none;border-radius:4px 0 0 4px"></div>
<div class="abs" style="left:143.700px;top:452px;width:39.300px;height:14px;overflow:hidden"><div class="abs" style="left:0.0px;top:2px;font:10px 'Liberation Sans',sans-serif;letter-spacing:-0.54px;color:#222;white-space:nowrap;line-height:11px;">Reset search</div></div>
<div class="abs" style="left:3.5px;top:476px;width:166px;height:161.5px;background:#fff;"></div>
<div class="abs" style="left:8.0px;top:480px;font:10px 'Liberation Sans',sans-serif;letter-spacing:-0.49px;color:#222;white-space:nowrap;line-height:11px;">Component</div>
<div class="abs" style="left:143.0px;top:480px;font:10px 'Liberation Sans',sans-serif;letter-spacing:-0.56px;color:#222;white-space:nowrap;line-height:11px;">Chara</div>
<div class="abs" style="left:37.7px;top:494px;width:131.8px;height:13.5px;background:#dcdcdc;"></div>
<div class="abs" style="left:137.2px;top:476px;width:1px;height:161.5px;background:#b0b0b0;"></div>
<div class="abs" style="left:176px;top:491.5px;width:1.5px;height:14.5px;background:#555;"></div>
<div class="abs" style="left:14px;top:500.5px;width:7px;height:1px;background-image:linear-gradient(90deg,#bbb 50%,transparent 50%);background-size:2px 1px"></div>
<svg class="abs" style="left:6.0px;top:496.0px;" width="9" height="9" viewBox="0 0 9 9"><rect x="0.500" y="0.500" width="8" height="8" fill="#fff" stroke="#b4b4b4" stroke-width="1"/><path d="M2.500 4.500h4" stroke="#4a5a80" stroke-width="1"/></svg>
<svg class="abs" style="left:20.8px;top:494px;" width="14" height="13.5" viewBox="0 0 14 13.5"><rect x="0.500" y="0.500" width="4.500" height="12.500" fill="#5b9be8" stroke="#3c4151" stroke-width="1"/><rect x="5" y="0.500" width="4" height="12.500" fill="#60b040" stroke="#3c4151" stroke-width="1"/><rect x="9" y="0.500" width="4.500" height="12.500" fill="#e84030" stroke="#3c4151" stroke-width="1"/></svg>
<div class="abs" style="left:40.0px;top:495px;font:bold 10.5px 'Liberation Sans',sans-serif;letter-spacing:0.69px;color:#111;white-space:nowrap;line-height:12px;">C:\Zuken\E3.s...</div>
<div class="abs" style="left:28px;top:507px;width:1px;height:124px;background-image:linear-gradient(180deg,#bbb 50%,transparent 50%);background-size:1px 2px"></div>
<div class="abs" style="left:32px;top:515.6px;width:7px;height:1px;background-image:linear-gradient(90deg,#bbb 50%,transparent 50%);background-size:2px 1px"></div>
<svg class="abs" style="left:24.0px;top:511.1px;" width="9" height="9" viewBox="0 0 9 9"><rect x="0.500" y="0.500" width="8" height="8" fill="#fff" stroke="#b4b4b4" stroke-width="1"/><path d="M2.500 4.500h4" stroke="#4a5a80" stroke-width="1"/><path d="M4.500 2.500v4" stroke="#4a5a80" stroke-width="1"/></svg>
<svg class="abs" style="left:39px;top:509.0px;" width="14" height="12" viewBox="0 0 14 12"><path d="M0.800 3.500v-2.500h4.200l1.200 2h5.800v1" fill="#fff" stroke="#3c4151" stroke-width=".9"/><rect x="0.500" y="3.500" width="11.500" height="8.500" fill="#ffc000"/><path d="M12.300 3.500v8.800h-12" fill="none" stroke="#3c4151" stroke-width="1"/></svg>
<div class="abs" style="left:58.7px;top:511px;font:10px 'Liberation Sans',sans-serif;letter-spacing:-0.12px;color:#222;white-space:nowrap;line-height:11px;">2/2-directional ...</div>
<div class="abs" style="left:32px;top:530.0px;width:7px;height:1px;background-image:linear-gradient(90deg,#bbb 50%,transparent 50%);background-size:2px 1px"></div>
<svg class="abs" style="left:24.0px;top:525.5px;" width="9" height="9" viewBox="0 0 9 9"><rect x="0.500" y="0.500" width="8" height="8" fill="#fff" stroke="#b4b4b4" stroke-width="1"/><path d="M2.500 4.500h4" stroke="#4a5a80" stroke-width="1"/><path d="M4.500 2.500v4" stroke="#4a5a80" stroke-width="1"/></svg>
<svg class="abs" style="left:39px;top:523.4px;" width="14" height="12" viewBox="0 0 14 12"><path d="M0.800 3.500v-2.500h4.200l1.200 2h5.800v1" fill="#fff" stroke="#3c4151" stroke-width=".9"/><rect x="0.500" y="3.500" width="11.500" height="8.500" fill="#ffc000"/><path d="M12.300 3.500v8.800h-12" fill="none" stroke="#3c4151" stroke-width="1"/></svg>
<div class="abs" style="left:58.7px;top:525px;font:10px 'Liberation Sans',sans-serif;letter-spacing:-0.12px;color:#222;white-space:nowrap;line-height:11px;">3/2-directional ...</div>
<div class="abs" style="left:32px;top:544.4px;width:7px;height:1px;background-image:linear-gradient(90deg,#bbb 50%,transparent 50%);background-size:2px 1px"></div>
<svg class="abs" style="left:24.0px;top:539.9px;" width="9" height="9" viewBox="0 0 9 9"><rect x="0.500" y="0.500" width="8" height="8" fill="#fff" stroke="#b4b4b4" stroke-width="1"/><path d="M2.500 4.500h4" stroke="#4a5a80" stroke-width="1"/><path d="M4.500 2.500v4" stroke="#4a5a80" stroke-width="1"/></svg>
<svg class="abs" style="left:39px;top:537.8px;" width="14" height="12" viewBox="0 0 14 12"><path d="M0.800 3.500v-2.500h4.200l1.200 2h5.800v1" fill="#fff" stroke="#3c4151" stroke-width=".9"/><rect x="0.500" y="3.500" width="11.500" height="8.500" fill="#ffc000"/><path d="M12.300 3.500v8.800h-12" fill="none" stroke="#3c4151" stroke-width="1"/></svg>
<div class="abs" style="left:58.7px;top:539px;font:10px 'Liberation Sans',sans-serif;letter-spacing:-0.26px;color:#222;white-space:nowrap;line-height:11px;">3D-Harness De...</div>
<div class="abs" style="left:32px;top:558.8000000000001px;width:7px;height:1px;background-image:linear-gradient(90deg,#bbb 50%,transparent 50%);background-size:2px 1px"></div>
<svg class="abs" style="left:24.0px;top:554.3000000000001px;" width="9" height="9" viewBox="0 0 9 9"><rect x="0.500" y="0.500" width="8" height="8" fill="#fff" stroke="#b4b4b4" stroke-width="1"/><path d="M2.500 4.500h4" stroke="#4a5a80" stroke-width="1"/><path d="M4.500 2.500v4" stroke="#4a5a80" stroke-width="1"/></svg>
<svg class="abs" style="left:39px;top:552.2px;" width="14" height="12" viewBox="0 0 14 12"><path d="M0.800 3.500v-2.500h4.200l1.200 2h5.800v1" fill="#fff" stroke="#3c4151" stroke-width=".9"/><rect x="0.500" y="3.500" width="11.500" height="8.500" fill="#ffc000"/><path d="M12.300 3.500v8.800h-12" fill="none" stroke="#3c4151" stroke-width="1"/></svg>
<div class="abs" style="left:58.7px;top:554px;font:10px 'Liberation Sans',sans-serif;letter-spacing:-0.12px;color:#222;white-space:nowrap;line-height:11px;">4/2-directional ...</div>
<div class="abs" style="left:32px;top:573.2px;width:7px;height:1px;background-image:linear-gradient(90deg,#bbb 50%,transparent 50%);background-size:2px 1px"></div>
<svg class="abs" style="left:24.0px;top:568.7px;" width="9" height="9" viewBox="0 0 9 9"><rect x="0.500" y="0.500" width="8" height="8" fill="#fff" stroke="#b4b4b4" stroke-width="1"/><path d="M2.500 4.500h4" stroke="#4a5a80" stroke-width="1"/><path d="M4.500 2.500v4" stroke="#4a5a80" stroke-width="1"/></svg>
<svg class="abs" style="left:39px;top:566.6px;" width="14" height="12" viewBox="0 0 14 12"><path d="M0.800 3.500v-2.500h4.200l1.200 2h5.800v1" fill="#fff" stroke="#3c4151" stroke-width=".9"/><rect x="0.500" y="3.500" width="11.500" height="8.500" fill="#ffc000"/><path d="M12.300 3.500v8.800h-12" fill="none" stroke="#3c4151" stroke-width="1"/></svg>
<div class="abs" style="left:58.7px;top:568px;font:10px 'Liberation Sans',sans-serif;letter-spacing:-0.12px;color:#222;white-space:nowrap;line-height:11px;">4/3-directional ...</div>
<div class="abs" style="left:32px;top:587.6px;width:7px;height:1px;background-image:linear-gradient(90deg,#bbb 50%,transparent 50%);background-size:2px 1px"></div>
<svg class="abs" style="left:24.0px;top:583.1px;" width="9" height="9" viewBox="0 0 9 9"><rect x="0.500" y="0.500" width="8" height="8" fill="#fff" stroke="#b4b4b4" stroke-width="1"/><path d="M2.500 4.500h4" stroke="#4a5a80" stroke-width="1"/><path d="M4.500 2.500v4" stroke="#4a5a80" stroke-width="1"/></svg>
<svg class="abs" style="left:39px;top:581.0px;" width="14" height="12" viewBox="0 0 14 12"><path d="M0.800 3.500v-2.500h4.200l1.200 2h5.800v1" fill="#fff" stroke="#3c4151" stroke-width=".9"/><rect x="0.500" y="3.500" width="11.500" height="8.500" fill="#ffc000"/><path d="M12.300 3.500v8.800h-12" fill="none" stroke="#3c4151" stroke-width="1"/></svg>
<div class="abs" style="left:58.7px;top:583px;font:10px 'Liberation Sans',sans-serif;letter-spacing:-0.12px;color:#222;white-space:nowrap;line-height:11px;">5/2-directional ...</div>
<div class="abs" style="left:32px;top:602.0px;width:7px;height:1px;background-image:linear-gradient(90deg,#bbb 50%,transparent 50%);background-size:2px 1px"></div>
<svg class="abs" style="left:24.0px;top:597.5px;" width="9" height="9" viewBox="0 0 9 9"><rect x="0.500" y="0.500" width="8" height="8" fill="#fff" stroke="#b4b4b4" stroke-width="1"/><path d="M2.500 4.500h4" stroke="#4a5a80" stroke-width="1"/><path d="M4.500 2.500v4" stroke="#4a5a80" stroke-width="1"/></svg>
<svg class="abs" style="left:39px;top:595.4px;" width="14" height="12" viewBox="0 0 14 12"><path d="M0.800 3.500v-2.500h4.200l1.200 2h5.800v1" fill="#fff" stroke="#3c4151" stroke-width=".9"/><rect x="0.500" y="3.500" width="11.500" height="8.500" fill="#ffc000"/><path d="M12.300 3.500v8.800h-12" fill="none" stroke="#3c4151" stroke-width="1"/></svg>
<div class="abs" style="left:58.7px;top:597px;font:10px 'Liberation Sans',sans-serif;letter-spacing:-0.12px;color:#222;white-space:nowrap;line-height:11px;">5/3-directional ...</div>
<div class="abs" style="left:32px;top:616.4px;width:7px;height:1px;background-image:linear-gradient(90deg,#bbb 50%,transparent 50%);background-size:2px 1px"></div>
<svg class="abs" style="left:24.0px;top:611.9px;" width="9" height="9" viewBox="0 0 9 9"><rect x="0.500" y="0.500" width="8" height="8" fill="#fff" stroke="#b4b4b4" stroke-width="1"/><path d="M2.500 4.500h4" stroke="#4a5a80" stroke-width="1"/><path d="M4.500 2.500v4" stroke="#4a5a80" stroke-width="1"/></svg>
<svg class="abs" style="left:39px;top:609.8px;" width="14" height="12" viewBox="0 0 14 12"><path d="M0.800 3.500v-2.500h4.200l1.200 2h5.800v1" fill="#fff" stroke="#3c4151" stroke-width=".9"/><rect x="0.500" y="3.500" width="11.500" height="8.500" fill="#ffc000"/><path d="M12.300 3.500v8.800h-12" fill="none" stroke="#3c4151" stroke-width="1"/></svg>
<div class="abs" style="left:58.7px;top:611px;font:10px 'Liberation Sans',sans-serif;letter-spacing:-0.38px;color:#222;white-space:nowrap;line-height:11px;">ABB AC500</div>
<div class="abs" style="left:32px;top:630.8000000000001px;width:7px;height:1px;background-image:linear-gradient(90deg,#bbb 50%,transparent 50%);background-size:2px 1px"></div>
<svg class="abs" style="left:24.0px;top:626.3000000000001px;" width="9" height="9" viewBox="0 0 9 9"><rect x="0.500" y="0.500" width="8" height="8" fill="#fff" stroke="#b4b4b4" stroke-width="1"/><path d="M2.500 4.500h4" stroke="#4a5a80" stroke-width="1"/><path d="M4.500 2.500v4" stroke="#4a5a80" stroke-width="1"/></svg>
<svg class="abs" style="left:39px;top:624.2px;" width="14" height="12" viewBox="0 0 14 12"><path d="M0.800 3.500v-2.500h4.200l1.200 2h5.800v1" fill="#fff" stroke="#3c4151" stroke-width=".9"/><rect x="0.500" y="3.500" width="11.500" height="8.500" fill="#ffc000"/><path d="M12.300 3.500v8.800h-12" fill="none" stroke="#3c4151" stroke-width="1"/></svg>
<div class="abs" style="left:58.7px;top:626px;font:10px 'Liberation Sans',sans-serif;letter-spacing:-0.36px;color:#222;white-space:nowrap;line-height:11px;">Accessories</div>
<div class="abs" style="left:18px;top:644.3px;width:55.5px;height:1.6px;background:#7a7a7a;"></div>
<div class="abs" style="left:3.5px;top:651px;width:64px;height:19.5px;background:#fff;"></div>
<div class="abs" style="left:3.5px;top:668px;width:64px;height:2.5px;background:#bcd2f2;"></div>
<svg class="abs" style="left:6.3px;top:652px;" width="15" height="14" viewBox="0 0 15 14"><rect x="0.5" y="0.500" width="4.500" height="12.500" fill="#62a0ea" stroke="#3c4151" stroke-width="1"/><rect x="5.0" y="0.500" width="4.500" height="12.500" fill="#fff" stroke="#3c4151" stroke-width="1"/><rect x="9.5" y="0.500" width="4.500" height="12.500" fill="#fff" stroke="#3c4151" stroke-width="1"/></svg>
<div class="abs" style="left:23.4px;top:655px;font:10.3px 'Liberation Sans',sans-serif;letter-spacing:-0.23px;color:#555;white-space:nowrap;line-height:11px;">Compo...</div>
<svg class="abs" style="left:72px;top:652px;" width="15" height="14" viewBox="0 0 15 14"><rect x="0.5" y="0.500" width="4.500" height="12.500" fill="#fff" stroke="#3c4151" stroke-width="1"/><rect x="5.0" y="0.500" width="4.500" height="12.500" fill="#70ad47" stroke="#3c4151" stroke-width="1"/><rect x="9.5" y="0.500" width="4.500" height="12.500" fill="#fff" stroke="#3c4151" stroke-width="1"/></svg>
<div class="abs" style="left:89.0px;top:655px;font:10.3px 'Liberation Sans',sans-serif;letter-spacing:-0.35px;color:#555;white-space:nowrap;line-height:11px;">Symbol</div>
<div class="abs" style="left:70.5px;top:668px;width:54.5px;height:2.5px;background:#ffd560;"></div>
<svg class="abs" style="left:132.2px;top:652px;" width="15" height="14" viewBox="0 0 15 14"><rect x="0.5" y="0.500" width="4.500" height="12.500" fill="#fff" stroke="#3c4151" stroke-width="1"/><rect x="5.0" y="0.500" width="4.500" height="12.500" fill="#fff" stroke="#3c4151" stroke-width="1"/><rect x="9.5" y="0.500" width="4.500" height="12.500" fill="#e84030" stroke="#3c4151" stroke-width="1"/></svg>
<div class="abs" style="left:148.4px;top:655px;font:10.3px 'Liberation Sans',sans-serif;letter-spacing:-0.52px;color:#555;white-space:nowrap;line-height:11px;">Misc</div>
<div class="abs" style="left:130px;top:668px;width:42px;height:2.5px;background:#a9cf90;"></div>
<div class="abs" style="left:1px;top:671.7px;width:1198px;height:6px;background:#d4d4d4;"></div>
<svg class="abs" style="left:190px;top:123px" width="1006.3" height="547.7" viewBox="190 123 1006.3 547.7"><defs><pattern id="hh" width="3.600" height="4" patternUnits="userSpaceOnUse" x="226.300" y="130"><path d="M0.600 3.300l2.400-2.600" stroke="#404040" stroke-width="1" fill="none"/></pattern><pattern id="hv" width="4" height="3.600" patternUnits="userSpaceOnUse" x="225.600" y="134"><path d="M0.700 3l2.600-2.400" stroke="#404040" stroke-width="1" fill="none"/></pattern></defs>
<rect x="190" y="123.8" width="1006.3" height="546.9000000000001" fill="#fff"/>
<polyline points="190.8,670.7 190.8,124.6 963.0,124.6 963.0,670.7" fill="none" stroke="#3c3c3c" stroke-width="1.2" />
<polyline points="227.0,133.6 199.6,133.6 199.6,661.7 955.0,661.7" fill="none" stroke="#3c3c3c" stroke-width="1.1" />
<polyline points="955.0,634.0 955.0,661.7" fill="none" stroke="#3c3c3c" stroke-width="1.1" />
<rect x="226.300" y="130" width="730" height="4" fill="url(#hh)"/>
<rect x="226.300" y="631.500" width="730" height="4" fill="url(#hh)"/>
<rect x="225.600" y="134" width="4" height="498" fill="url(#hv)"/>
<rect x="953.500" y="134" width="4" height="498" fill="url(#hv)"/>
<text x="252.5" y="130" font-family="Liberation Sans,sans-serif" font-size="3.500" fill="#667">1</text>
<text x="252.5" y="668.500" font-family="Liberation Sans,sans-serif" font-size="4" fill="#556">1</text>
<polyline points="300.5,125.0 300.5,132.0" fill="none" stroke="#3c3c3c" stroke-width="1.1" />
<polyline points="300.5,662.0 300.5,670.0" fill="none" stroke="#3c3c3c" stroke-width="1.1" />
<text x="344.5" y="130" font-family="Liberation Sans,sans-serif" font-size="3.500" fill="#667">2</text>
<text x="344.5" y="668.500" font-family="Liberation Sans,sans-serif" font-size="4" fill="#556">2</text>
<polyline points="392.5,125.0 392.5,132.0" fill="none" stroke="#3c3c3c" stroke-width="1.1" />
<polyline points="392.5,662.0 392.5,670.0" fill="none" stroke="#3c3c3c" stroke-width="1.1" />
<text x="436.5" y="130" font-family="Liberation Sans,sans-serif" font-size="3.500" fill="#667">3</text>
<text x="436.5" y="668.500" font-family="Liberation Sans,sans-serif" font-size="4" fill="#556">3</text>
<polyline points="484.5,125.0 484.5,132.0" fill="none" stroke="#3c3c3c" stroke-width="1.1" />
<polyline points="484.5,662.0 484.5,670.0" fill="none" stroke="#3c3c3c" stroke-width="1.1" />
<text x="528.5" y="130" font-family="Liberation Sans,sans-serif" font-size="3.500" fill="#667">4</text>
<text x="528.5" y="668.500" font-family="Liberation Sans,sans-serif" font-size="4" fill="#556">4</text>
<polyline points="576.5,125.0 576.5,132.0" fill="none" stroke="#3c3c3c" stroke-width="1.1" />
<polyline points="576.5,662.0 576.5,670.0" fill="none" stroke="#3c3c3c" stroke-width="1.1" />
<text x="620.5" y="130" font-family="Liberation Sans,sans-serif" font-size="3.500" fill="#667">5</text>
<text x="620.5" y="668.500" font-family="Liberation Sans,sans-serif" font-size="4" fill="#556">5</text>
<polyline points="668.5,125.0 668.5,132.0" fill="none" stroke="#3c3c3c" stroke-width="1.1" />
<polyline points="668.5,662.0 668.5,670.0" fill="none" stroke="#3c3c3c" stroke-width="1.1" />
<text x="712.5" y="130" font-family="Liberation Sans,sans-serif" font-size="3.500" fill="#667">6</text>
<text x="712.5" y="668.500" font-family="Liberation Sans,sans-serif" font-size="4" fill="#556">6</text>
<polyline points="760.5,125.0 760.5,132.0" fill="none" stroke="#3c3c3c" stroke-width="1.1" />
<polyline points="760.5,662.0 760.5,670.0" fill="none" stroke="#3c3c3c" stroke-width="1.1" />
<text x="804.5" y="130" font-family="Liberation Sans,sans-serif" font-size="3.500" fill="#667">7</text>
<text x="804.5" y="668.500" font-family="Liberation Sans,sans-serif" font-size="4" fill="#556">7</text>
<polyline points="852.5,125.0 852.5,132.0" fill="none" stroke="#3c3c3c" stroke-width="1.1" />
<polyline points="852.5,662.0 852.5,670.0" fill="none" stroke="#3c3c3c" stroke-width="1.1" />
<text x="896.5" y="130" font-family="Liberation Sans,sans-serif" font-size="3.500" fill="#667">8</text>
<text x="896.5" y="668.500" font-family="Liberation Sans,sans-serif" font-size="4" fill="#556">8</text>
<polyline points="192.0,213.5 199.6,213.5" fill="none" stroke="#3c3c3c" stroke-width="1.1" />
<polyline points="956.0,213.5 963.0,213.5" fill="none" stroke="#3c3c3c" stroke-width="1.1" />
<polyline points="192.0,305.5 199.6,305.5" fill="none" stroke="#3c3c3c" stroke-width="1.1" />
<polyline points="956.0,305.5 963.0,305.5" fill="none" stroke="#3c3c3c" stroke-width="1.1" />
<polyline points="192.0,397.5 199.6,397.5" fill="none" stroke="#3c3c3c" stroke-width="1.1" />
<polyline points="956.0,397.5 963.0,397.5" fill="none" stroke="#3c3c3c" stroke-width="1.1" />
<polyline points="192.0,489.5 199.6,489.5" fill="none" stroke="#3c3c3c" stroke-width="1.1" />
<polyline points="956.0,489.5 963.0,489.5" fill="none" stroke="#3c3c3c" stroke-width="1.1" />
<polyline points="192.0,581.5 199.6,581.5" fill="none" stroke="#3c3c3c" stroke-width="1.1" />
<polyline points="956.0,581.5 963.0,581.5" fill="none" stroke="#3c3c3c" stroke-width="1.1" />
<text x="194" y="170" font-family="Liberation Sans,sans-serif" font-size="3.500" fill="#667">A</text>
<text x="958" y="170" font-family="Liberation Sans,sans-serif" font-size="3.500" fill="#667">A</text>
<text x="194" y="262" font-family="Liberation Sans,sans-serif" font-size="3.500" fill="#667">B</text>
<text x="958" y="262" font-family="Liberation Sans,sans-serif" font-size="3.500" fill="#667">B</text>
<text x="194" y="354" font-family="Liberation Sans,sans-serif" font-size="3.500" fill="#667">C</text>
<text x="958" y="354" font-family="Liberation Sans,sans-serif" font-size="3.500" fill="#667">C</text>
<text x="194" y="446" font-family="Liberation Sans,sans-serif" font-size="3.500" fill="#667">D</text>
<text x="958" y="446" font-family="Liberation Sans,sans-serif" font-size="3.500" fill="#667">D</text>
<text x="194" y="538" font-family="Liberation Sans,sans-serif" font-size="3.500" fill="#667">E</text>
<text x="958" y="538" font-family="Liberation Sans,sans-serif" font-size="3.500" fill="#667">E</text>
<text x="194" y="630" font-family="Liberation Sans,sans-serif" font-size="3.500" fill="#667">F</text>
<text x="958" y="630" font-family="Liberation Sans,sans-serif" font-size="3.500" fill="#667">F</text>
<polyline points="199.6,326.0 227.0,326.0" fill="none" stroke="#3c3c3c" stroke-width="1" />
<polyline points="199.6,462.7 227.0,462.7" fill="none" stroke="#3c3c3c" stroke-width="1" />
<polyline points="199.6,476.0 227.0,476.0" fill="none" stroke="#3c3c3c" stroke-width="1" />
<polyline points="199.6,609.5 227.0,609.5" fill="none" stroke="#3c3c3c" stroke-width="1" />
<polyline points="199.6,634.0 227.0,634.0" fill="none" stroke="#3c3c3c" stroke-width="1" />
<text transform="translate(205.3 458.5) rotate(-90)" font-family="Liberation Sans,sans-serif" font-size="3.6" font-weight="bold" fill="#333" textLength="30" lengthAdjust="spacingAndGlyphs">created with</text>
<text transform="translate(205.3 421) rotate(-90)" font-family="Liberation Sans,sans-serif" font-size="3.3" font-weight="normal" fill="#667" textLength="81" lengthAdjust="spacingAndGlyphs">UseCase1_MountingPlate_V2- finished</text>
<text transform="translate(211.5 421) rotate(-90)" font-family="Liberation Sans,sans-serif" font-size="3.3" font-weight="normal" fill="#667" textLength="64" lengthAdjust="spacingAndGlyphs">E3.series Training 2020</text>
<text transform="translate(225.5 421) rotate(-90)" font-family="Liberation Sans,sans-serif" font-size="2.6" font-weight="normal" fill="#99a" textLength="36" lengthAdjust="spacingAndGlyphs">12.08.2020  14:42</text>
<text transform="translate(221.500 455.500) rotate(-90)" font-family="Liberation Sans,sans-serif" font-size="17" font-weight="bold" font-style="italic" fill="#e02a20" stroke="#e02a20" stroke-width=".8">E</text>
<text transform="translate(213.500 445) rotate(-90)" font-family="Liberation Sans,sans-serif" font-size="10.500" font-weight="bold" font-style="italic" fill="#e02a20" stroke="#e02a20" stroke-width=".6">3</text>
<rect x="219.500" y="439" width="2.500" height="2.500" fill="#e02a20"/>
<text transform="translate(204.5 606) rotate(-90)" font-family="Liberation Sans,sans-serif" font-size="3.2" font-weight="bold" fill="#3a3a4a" textLength="128" lengthAdjust="spacingAndGlyphs">All reserved (c) rights - in this document and in the informa-</text>
<text transform="translate(209.7 606) rotate(-90)" font-family="Liberation Sans,sans-serif" font-size="3.2" font-weight="bold" fill="#3a3a4a" textLength="118.25" lengthAdjust="spacingAndGlyphs">tion contained therein. Reproduction, use or disclosure</text>
<text transform="translate(214.9 606) rotate(-90)" font-family="Liberation Sans,sans-serif" font-size="3.2" font-weight="bold" fill="#3a3a4a" textLength="116.1" lengthAdjust="spacingAndGlyphs">to third parties without express authority is strictly</text>
<text transform="translate(220.1 606) rotate(-90)" font-family="Liberation Sans,sans-serif" font-size="3.2" font-weight="bold" fill="#3a3a4a" textLength="21.5" lengthAdjust="spacingAndGlyphs">forbidden.</text>
<text transform="translate(225.3 606) rotate(-90)" font-family="Liberation Sans,sans-serif" font-size="3.2" font-weight="bold" fill="#3a3a4a" textLength="19.349999999999998" lengthAdjust="spacingAndGlyphs">(c) Zuken</text>
<text transform="translate(225 612) rotate(-90)" font-family="Liberation Sans,sans-serif" font-size="2.6" font-weight="normal" fill="#99a">1:10</text>
<polyline points="199.6,640.5 382.0,640.5" fill="none" stroke="#3c3c3c" stroke-width="0.9" />
<polyline points="199.6,647.0 382.0,647.0" fill="none" stroke="#3c3c3c" stroke-width="0.9" />
<polyline points="199.6,653.8 382.0,653.8" fill="none" stroke="#3c3c3c" stroke-width="0.9" />
<polyline points="229.0,634.0 229.0,661.7" fill="none" stroke="#3c3c3c" stroke-width="0.9" />
<polyline points="266.0,634.0 266.0,661.7" fill="none" stroke="#3c3c3c" stroke-width="0.9" />
<polyline points="288.0,634.0 288.0,661.7" fill="none" stroke="#3c3c3c" stroke-width="0.9" />
<polyline points="311.5,634.0 311.5,661.7" fill="none" stroke="#3c3c3c" stroke-width="0.9" />
<polyline points="334.0,634.0 334.0,661.7" fill="none" stroke="#3c3c3c" stroke-width="0.9" />
<polyline points="382.0,634.0 382.0,661.7" fill="none" stroke="#3c3c3c" stroke-width="0.9" />
<polyline points="382.0,653.8 531.0,653.8" fill="none" stroke="#3c3c3c" stroke-width="0.9" />
<polyline points="456.0,653.8 456.0,661.7" fill="none" stroke="#3c3c3c" stroke-width="0.9" />
<polyline points="531.0,634.0 531.0,661.7" fill="none" stroke="#3c3c3c" stroke-width="0.9" />
<polyline points="610.0,634.0 610.0,661.7" fill="none" stroke="#3c3c3c" stroke-width="0.9" />
<polyline points="531.0,653.8 610.0,653.8" fill="none" stroke="#3c3c3c" stroke-width="0.9" />
<polyline points="737.5,634.0 737.5,661.7" fill="none" stroke="#3c3c3c" stroke-width="0.9" />
<polyline points="737.5,646.7 955.0,646.7" fill="none" stroke="#3c3c3c" stroke-width="0.9" />
<polyline points="867.5,640.5 955.0,640.5" fill="none" stroke="#3c3c3c" stroke-width="0.9" />
<polyline points="867.5,634.0 867.5,640.5" fill="none" stroke="#3c3c3c" stroke-width="0.9" />
<polyline points="793.0,646.7 793.0,661.7" fill="none" stroke="#3c3c3c" stroke-width="0.9" />
<polyline points="923.0,646.7 923.0,661.7" fill="none" stroke="#3c3c3c" stroke-width="0.9" />
<polyline points="923.0,654.0 955.0,654.0" fill="none" stroke="#3c3c3c" stroke-width="0.9" />
<text x="202" y="659.5" font-family="Liberation Sans,sans-serif" font-size="3" fill="#556">Status</text>
<text x="232" y="659.5" font-family="Liberation Sans,sans-serif" font-size="3" fill="#556">change</text>
<text x="268.5" y="659.5" font-family="Liberation Sans,sans-serif" font-size="3" fill="#556">date</text>
<text x="291" y="659.5" font-family="Liberation Sans,sans-serif" font-size="3" fill="#556">name</text>
<text x="313.5" y="659.5" font-family="Liberation Sans,sans-serif" font-size="3" fill="#556">Standard</text>
<text x="384" y="659.5" font-family="Liberation Sans,sans-serif" font-size="3" fill="#556">Origin</text>
<text x="458" y="659.5" font-family="Liberation Sans,sans-serif" font-size="3" fill="#556">Repl. f</text>
<text x="533" y="659.5" font-family="Liberation Sans,sans-serif" font-size="3" fill="#556">Repl. by</text>
<text x="313.5" y="639.3" font-family="Liberation Sans,sans-serif" font-size="3" fill="#556">Date</text>
<text x="313.5" y="645.8" font-family="Liberation Sans,sans-serif" font-size="3" fill="#556">User</text>
<text x="313.5" y="652.6" font-family="Liberation Sans,sans-serif" font-size="3" fill="#556">Printed</text>
<text x="925" y="652.5" font-family="Liberation Sans,sans-serif" font-size="3" fill="#556">Sheet</text>
<text x="941" y="652.5" font-family="Liberation Sans,sans-serif" font-size="3" fill="#6a9ad8">1</text>
<text x="941" y="660" font-family="Liberation Sans,sans-serif" font-size="3" fill="#556">2  Sh.</text>
<text x="536.500" y="648" font-family="Liberation Sans,sans-serif" font-size="13.500" font-weight="bold" fill="#1a1a1a" textLength="64" lengthAdjust="spacingAndGlyphs">ZUKEN</text>
<path d="M538 648l9.500-10" stroke="#fff" stroke-width="1.200"/><polygon points="390.6,133.0 400.0,133.0 393.5,296.0 389.0,294.0 384.3,293.7" fill="#9c9c9c" stroke="#555" stroke-width="0.7" stroke-linejoin="round" />
<polyline points="393.6,133.0 387.3,293.8" fill="none" stroke="#666" stroke-width="0.7" />
<polyline points="396.6,133.0 390.2,294.5" fill="none" stroke="#666" stroke-width="0.7" />
<polygon points="400.0,133.0 413.8,133.0 406.8,299.2 392.8,298.5" fill="#f1f1f1" stroke="#3a3a3a" stroke-width="0.8" stroke-linejoin="round" />
<polygon points="413.8,133.0 418.8,133.0 411.6,299.6 406.8,299.2" fill="#fff" stroke="#3a3a3a" stroke-width="0.8" stroke-linejoin="round" />
<polygon points="475.0,133.0 488.0,133.0 482.0,283.7 468.7,282.2" fill="#f1f1f1" stroke="#3a3a3a" stroke-width="0.8" stroke-linejoin="round" />
<polygon points="488.0,133.0 492.5,133.0 485.3,283.2 482.0,283.7" fill="#fff" stroke="#3a3a3a" stroke-width="0.8" stroke-linejoin="round" />
<polygon points="418.8,133.0 475.0,133.0 468.7,282.2 471.2,290.0 499.0,320.5 429.0,341.5 413.9,300.3 411.6,299.6" fill="#adadad" stroke="#3a3a3a" stroke-width="0.8" stroke-linejoin="round" />
<polygon points="388.0,309.6 397.2,307.0 524.5,584.7 523.5,585.2 518.6,578.3 514.2,580.8" fill="#9c9c9c" stroke="#555" stroke-width="0.7" stroke-linejoin="round" />
<polyline points="391.0,308.7 517.5,579.5" fill="none" stroke="#666" stroke-width="0.7" />
<polyline points="394.0,307.8 520.5,581.5" fill="none" stroke="#666" stroke-width="0.7" />
<polygon points="397.2,307.0 409.8,302.2 538.3,577.8 524.5,584.7" fill="#f1f1f1" stroke="#3a3a3a" stroke-width="0.8" stroke-linejoin="round" />
<polygon points="409.8,302.2 413.9,300.3 541.8,574.4 538.3,577.8" fill="#fff" stroke="#3a3a3a" stroke-width="0.8" stroke-linejoin="round" />
<polygon points="392.8,298.5 406.8,299.2 411.6,299.6 413.9,300.3 409.8,302.2 397.2,307.0 391.0,302.0" fill="#d8d8d8" stroke="#3a3a3a" stroke-width="0.7" stroke-linejoin="round" />
<polyline points="396.8,300.5 399.0,306.0" fill="none" stroke="#2040ff" stroke-width="1.6" />
<circle cx="401" cy="302.500" r="1.300" fill="#fff" stroke="none"/>
<polygon points="471.2,290.0 483.5,285.1 599.6,534.0 588.6,541.7" fill="#f1f1f1" stroke="#3a3a3a" stroke-width="0.8" stroke-linejoin="round" />
<polygon points="483.5,285.1 487.0,284.7 602.4,532.1 599.6,534.0" fill="#fff" stroke="#3a3a3a" stroke-width="0.8" stroke-linejoin="round" />
<polygon points="468.7,282.2 482.0,283.7 485.3,283.2 487.0,284.7 483.5,285.1 471.2,290.0" fill="#e4e4e4" stroke="#3a3a3a" stroke-width="0.7" stroke-linejoin="round" />
<circle cx="464.800" cy="281.200" r="1.500" fill="#fff" stroke="#444" stroke-width=".7"/><circle cx="466.300" cy="287.600" r="1.500" fill="#fff" stroke="#444" stroke-width=".7"/>
<rect x="472.300" y="287.800" width="2" height="1.800" fill="#e050a0"/>
<polygon points="436.8,349.3 502.7,328.3 513.4,380.5 462.4,402.2" fill="#a6a6a6" stroke="#3a3a3a" stroke-width="0.8" stroke-linejoin="round" />
<polygon points="465.6,411.0 517.2,388.6 588.6,541.7 541.8,574.4" fill="#adadad" stroke="#3a3a3a" stroke-width="0.8" stroke-linejoin="round" />
<polygon points="428.8,341.2 498.6,320.2 502.7,328.3 432.2,349.3" fill="#eeeeee" stroke="#3a3a3a" stroke-width="0.8" stroke-linejoin="round" />
<polyline points="433.5,351.0 503.5,330.0" fill="none" stroke="#3a3a3a" stroke-width="0.7" />
<polygon points="457.3,402.2 528.5,380.5 532.5,388.6 460.7,411.0" fill="#eeeeee" stroke="#3a3a3a" stroke-width="0.8" stroke-linejoin="round" />
<polyline points="456.2,400.2 527.5,378.6" fill="none" stroke="#3a3a3a" stroke-width="0.7" />
<polygon points="541.8,574.2 602.4,531.9 603.6,533.8 542.8,576.6" fill="#fff" stroke="#3a3a3a" stroke-width="0.7" stroke-linejoin="round" />
<polygon points="474.7,351.8 479.8,350.4 488.1,344.0 499.2,339.8 509.4,336.6 516.8,356.5 514.0,362.0 502.9,365.7 499.2,360.2 490.4,357.8 484.4,358.3" fill="#8c8c8c" stroke="#444" stroke-width="0.7" stroke-linejoin="round" />
<polyline points="479.8,350.4 484.0,353.5 492.0,351.0" fill="none" stroke="#555" stroke-width="0.6" />
<polygon points="507.5,337.2 512.5,335.6 514.0,339.0 509.0,341.0" fill="#4a4a4a" stroke="#333" stroke-width="0.5" stroke-linejoin="round" />
<polygon points="511.2,343.0 529.3,334.3 535.3,347.2 516.8,354.6" fill="#8e8e8e" stroke="#444" stroke-width="0.7" stroke-linejoin="round" />
<polygon points="523.7,337.0 529.3,334.3 535.3,347.2 530.2,348.6" fill="#707070" stroke="#333" stroke-width="0.6" stroke-linejoin="round" />
<circle cx="528.400" cy="342.100" r="1.300" fill="#e8e8e8" stroke="#333" stroke-width=".5"/>
<polygon points="515.5,354.5 521.0,352.5 523.5,357.5 518.0,360.0" fill="#4a4a4a" stroke="#333" stroke-width="0.5" stroke-linejoin="round" />
<polygon points="496.0,368.5 510.3,367.1 512.6,382.4 496.4,380.5" fill="#8a8a8a" stroke="#444" stroke-width="0.7" stroke-linejoin="round" />
<polygon points="510.3,367.1 516.0,366.0 519.5,379.5 512.6,382.4" fill="#555" stroke="#333" stroke-width="0.5" stroke-linejoin="round" />
<polygon points="513.5,370.0 517.5,369.0 518.6,373.0 514.4,374.0" fill="#e8e8e8" stroke="#444" stroke-width="0.5" stroke-linejoin="round" />
<polygon points="514.6,375.5 518.8,374.6 519.8,378.4 515.5,379.4" fill="#e8e8e8" stroke="#444" stroke-width="0.5" stroke-linejoin="round" />
<polyline points="516.5,365.5 521.5,364.0 525.5,378.5 521.0,381.0" fill="none" stroke="#444" stroke-width="0.7" />
<polygon points="493.6,357.4 499.2,358.3 501.5,363.0 501.0,367.0 496.0,368.3 495.4,362.0" fill="#3c3c3c" stroke="#222" stroke-width="0.5" stroke-linejoin="round" />
<polygon points="445.5,366.5 451.2,365.6 451.6,380.0 446.5,380.6" fill="#c4c4c4" stroke="#444" stroke-width="0.6" stroke-linejoin="round" />
<polyline points="447.5,366.2 448.0,380.3" fill="none" stroke="#555" stroke-width="0.6" />
<polygon points="451.1,366.2 459.9,364.8 459.9,377.7 451.6,380.0" fill="#f5d88a" stroke="#9a8030" stroke-width="0.6" stroke-linejoin="round" />
<polygon points="453.8,369.4 459.9,368.2 459.9,374.3 453.8,375.8" fill="#fff3a2" stroke="none" stroke-width="0" stroke-linejoin="round" />
<polyline points="451.3,369.8 459.9,368.2" fill="none" stroke="#8a7428" stroke-width="0.6" />
<polyline points="451.5,376.4 459.9,374.3" fill="none" stroke="#8a7428" stroke-width="0.6" />
<polygon points="455.7,356.0 458.5,353.8 465.0,354.6 475.2,357.8 484.0,359.0 495.5,361.5 459.0,357.3" fill="#6a6a6a" stroke="#333" stroke-width="0.6" stroke-linejoin="round" />
<polygon points="459.0,356.9 495.5,361.5 494.6,388.8 483.5,387.9 473.3,385.1 458.5,384.2 457.1,379.6 458.5,371.3" fill="#858585" stroke="#3a3a3a" stroke-width="0.8" stroke-linejoin="round" />
<polyline points="459.0,381.4 472.3,384.2" fill="none" stroke="#2a2a2a" stroke-width="1.3" />
<polyline points="473.3,385.3 476.0,387.8 483.5,388.2 494.6,389.0" fill="none" stroke="#333" stroke-width="1" />
<path d="M431.5 346.3C440.0 345.5 455.0 336.0 464.7 331.7C470.0 329.5 473.0 329.0 475.0 333.0L486.0 358.5" fill="none" stroke="#2440ff" stroke-width="1.1"/>
<path d="M431.8 346.8C441.6 345.5 456.6 336.5 466.3 332.0C471.6 329.5 474.6 329.0 476.6 333.0L487.6 358.2" fill="none" stroke="#2440ff" stroke-width="1.1"/>
<path d="M432.1 347.3C443.2 345.5 458.2 337.0 467.9 332.3C473.2 329.5 476.2 329.0 478.2 333.0L489.2 357.9" fill="none" stroke="#2440ff" stroke-width="1.1"/>
<path d="M460.0 407.9C470.0 405.0 480.0 399.5 487.0 396.0C492.0 394.0 494.0 392.0 494.5 389.5" fill="none" stroke="#2440ff" stroke-width="1.200"/>
<path d="M460.3 408.5C470.0 405.6 480.0 400.1 487.0 396.6C492.0 394.4 495.5 392.0 496.0 389.5" fill="none" stroke="#2440ff" stroke-width="1.200"/>
<rect x="489.500" y="327.500" width="3.500" height="3" fill="#e050a0"/><rect x="516.800" y="385.200" width="3.200" height="2.800" fill="#e050a0" transform="rotate(-20 518 386)"/>
<polyline points="498.0,392.0 516.0,386.5" fill="none" stroke="#333" stroke-width="1.1" />
<polygon points="517.0,597.6 523.0,597.6 523.0,588.7 526.0,587.7 524.4,633.0 515.0,633.0" fill="#9c9c9c" stroke="#555" stroke-width="0.7" stroke-linejoin="round" />
<polyline points="520.0,597.6 518.3,633.0" fill="none" stroke="#666" stroke-width="0.7" />
<polygon points="541.8,575.6 588.6,542.9 589.1,544.4 584.5,633.0 543.8,633.0 544.7,586.2" fill="#adadad" stroke="#3a3a3a" stroke-width="0.8" stroke-linejoin="round" />
<polygon points="526.0,587.7 541.3,589.2 539.0,633.0 524.4,633.0" fill="#f1f1f1" stroke="#3a3a3a" stroke-width="0.8" stroke-linejoin="round" />
<polygon points="541.3,589.2 544.7,586.2 543.8,633.0 539.0,633.0" fill="#fff" stroke="#3a3a3a" stroke-width="0.8" stroke-linejoin="round" />
<polygon points="526.0,587.7 530.0,585.6 544.7,586.2 541.3,589.2" fill="#f4f4f4" stroke="#3a3a3a" stroke-width="0.6" stroke-linejoin="round" />
<polygon points="589.1,544.4 602.1,543.5 598.4,633.0 584.5,633.0" fill="#f1f1f1" stroke="#3a3a3a" stroke-width="0.8" stroke-linejoin="round" />
<polygon points="602.1,543.5 606.7,543.5 602.1,633.0 598.4,633.0" fill="#fff" stroke="#3a3a3a" stroke-width="0.8" stroke-linejoin="round" />
<path d="M527.500 585.800l3.500-2.300 0.500 2.800z" fill="#e050a0"/><path d="M590.500 542.600l3.500-1.800 0 2.600z" fill="#e050a0"/>
<circle cx="584.500" cy="539.800" r="1.200" fill="#fff" stroke="#333" stroke-width=".6"/><circle cx="586.400" cy="550" r="1.200" fill="#fff" stroke="#333" stroke-width=".6"/><polyline points="265.5,595.9 266.8,571.0" fill="none" stroke="#20e020" stroke-width="1.1" />
<path d="M265.500 573.500l1.300-4 1.300 4z" fill="#20e020"/>
<polyline points="265.5,595.9 273.0,592.3" fill="none" stroke="#e05a48" stroke-width="1.1" />
<path d="M271.500 591.200l3 0.300-1.500 2.200z" fill="#e05a48"/>
<polyline points="265.5,595.9 289.0,599.0" fill="none" stroke="#4a80e0" stroke-width="1.3" />
<path d="M288 597.300l3.500 2-3.800 1.400z" fill="#2c44e8"/>
<text x="266.500" y="563.300" font-family="Liberation Sans,sans-serif" font-size="12.500" fill="#30e030">y</text>
<text x="275" y="592.500" font-family="Liberation Sans,sans-serif" font-size="12" fill="#e05a48">x</text>
<text x="295.500" y="599.800" font-family="Liberation Sans,sans-serif" font-size="12.500" fill="#2c44e8">z</text></svg>
<div class="abs" style="left:1px;top:677px;width:1198px;height:89px;background:#e6e6e6;"></div>
<div class="abs" style="left:7.0px;top:686px;font:16px 'Liberation Sans',sans-serif;letter-spacing:0.05px;color:#626872;white-space:nowrap;line-height:17px;">Messages</div>
<svg class="abs" style="left:1043px;top:692px;" width="8" height="5" viewBox="0 0 8 5"><path d="M0 0h7.500l-3.750 4.500z" fill="#666"/></svg><svg class="abs" style="left:1061px;top:689px;" width="8" height="10" viewBox="0 0 8 10"><path d="M2 1h4M2.500 1v4.500M5.500 1v4.500M1 5.500h6M4 5.500v4" fill="none" stroke="#666" stroke-width="1.100"/></svg><svg class="abs" style="left:1078px;top:690px;" width="8" height="8" viewBox="0 0 8 8"><path d="M0.500 0.500l7 7m0-7l-7 7" stroke="#666" stroke-width="1.300" fill="none"/></svg>
<div class="abs" style="left:3px;top:709.6px;width:1073.5px;height:35.6px;background:#fff;"></div>
<div class="abs" style="left:1076.5px;top:709.6px;width:14px;height:35.6px;background:#efefef;"></div>
<div class="abs" style="left:1091.3px;top:677px;width:4.3px;height:89px;background:#dadada;"></div>
<div class="abs" style="left:4.3px;top:710px;font:11.9px 'Liberation Mono',monospace;letter-spacing:0.01px;color:#111;white-space:nowrap;line-height:14px;">I - Validating project</div>
<div class="abs" style="left:4.3px;top:721px;font:11.9px 'Liberation Mono',monospace;letter-spacing:0.04px;color:#111;white-space:nowrap;line-height:14px;">I - Validation enabled for this project</div>
<div class="abs" style="left:3px;top:745.5px;width:69.2px;height:19.3px;background:#fff;"></div>
<div class="abs" style="left:3px;top:761.5px;width:69.2px;height:3.3px;background:#bcd2f2;"></div>
<svg class="abs" style="left:6px;top:748px;" width="15" height="10" viewBox="0 0 15 10"><rect x="0.600" y="0.600" width="13.800" height="8.800" rx="1" fill="#fff" stroke="#3c4151" stroke-width="1.200"/><path d="M1 2h13" stroke="#6a9ae0" stroke-width="1.600"/><path d="M3 5h8M3 7.300h6" stroke="#3c4151" stroke-width="1"/></svg>
<div class="abs" style="left:22.6px;top:749px;font:10px 'Liberation Sans',sans-serif;letter-spacing:-0.17px;color:#555;white-space:nowrap;line-height:11px;">Messages</div>
<svg class="abs" style="left:77px;top:748px;" width="15" height="10" viewBox="0 0 15 10"><rect x="0.600" y="0.600" width="13.800" height="8.800" rx="1" fill="#fff" stroke="#3c4151" stroke-width="1.200"/><path d="M1 2h13" stroke="#e08070" stroke-width="1.600"/><path d="M3 5h8M3 7.300h6" stroke="#3c4151" stroke-width="1"/></svg>
<div class="abs" style="left:94.0px;top:749px;font:10px 'Liberation Sans',sans-serif;letter-spacing:-0.12px;color:#555;white-space:nowrap;line-height:11px;">Results</div>
<div class="abs" style="left:75.7px;top:761.5px;width:54.7px;height:2.6px;background:#ffd560;"></div>
<div class="abs" style="left:1101.0px;top:686px;font:16px 'Liberation Sans',sans-serif;letter-spacing:-0.79px;color:#626872;white-space:nowrap;line-height:17px;">Pre...</div>
<svg class="abs" style="left:1150px;top:692px;" width="8" height="5" viewBox="0 0 8 5"><path d="M0 0h7.500l-3.750 4.500z" fill="#666"/></svg><svg class="abs" style="left:1168px;top:689px;" width="8" height="10" viewBox="0 0 8 10"><path d="M2 1h4M2.500 1v4.500M5.500 1v4.500M1 5.500h6M4 5.500v4" fill="none" stroke="#666" stroke-width="1.100"/></svg><svg class="abs" style="left:1185px;top:690px;" width="8" height="8" viewBox="0 0 8 8"><path d="M0.500 0.500l7 7m0-7l-7 7" stroke="#666" stroke-width="1.300" fill="none"/></svg>
<div class="abs" style="left:1096.5px;top:709.7px;width:101px;height:35.2px;background:#fff;border:1.300px solid #222"></div>
<div class="abs" style="left:1097px;top:745px;width:48.7px;height:19.8px;background:#fff;"></div>
<div class="abs" style="left:1097px;top:761.5px;width:48.7px;height:3.3px;background:#bcd2f2;"></div>
<svg class="abs" style="left:1100.5px;top:746.5px;" width="14" height="13" viewBox="0 0 14 13"><rect x="0.500" y="0.500" width="13" height="12" fill="#fff" stroke="#888" stroke-width="1"/><path d="M0.500 1h13" stroke="#6a9ae0" stroke-width="1.500"/><path d="M3 3.500h8v5l-2 2h-6z" fill="#fff" stroke="#999" stroke-width=".9"/></svg>
<div class="abs" style="left:1117.0px;top:749px;font:10px 'Liberation Sans',sans-serif;letter-spacing:-0.49px;color:#555;white-space:nowrap;line-height:11px;">Previ...</div>
<div class="abs" style="left:1151.7px;top:749px;font:10px 'Liberation Sans',sans-serif;letter-spacing:-0.27px;color:#555;white-space:nowrap;line-height:11px;">3D Prev...</div>
<div class="abs" style="left:1147.8px;top:761.5px;width:45.6px;height:2.6px;background:#ffd560;"></div>
<div class="abs" style="left:3px;top:765.7px;width:1194.5px;height:26px;background:#f0f0f0;border-radius:4px"></div>
<div class="grip" style="left:6px;top:771.500px;height:14px"></div>
<svg class="abs" style="left:14.3px;top:770.3px" width="16.4" height="16.4" viewBox="0 0 16 16"><path d="M1 15l14-13.500" fill="none" stroke="#3c4151" stroke-width="1.3" /></svg>
<svg class="abs" style="left:36.8px;top:770.3px" width="16.4" height="16.4" viewBox="0 0 16 16"><path d="M8 1.500l6.800 5-2.600 8h-8.400l-2.600-8z" fill="none" stroke="#3c4151" stroke-width="1.3" /></svg>
<svg class="abs" style="left:59.3px;top:770.3px" width="16.4" height="16.4" viewBox="0 0 16 16"><rect x="4" y="1.5" width="8.5" height="13" fill="none" stroke="#3c4151" stroke-width="1.3"/></svg>
<svg class="abs" style="left:82.3px;top:770.3px" width="16.4" height="16.4" viewBox="0 0 16 16"><path d="M3 4c2-4 9-3 7 2c-1 3-5 4-3 7c1 2 5 1 6-1" fill="none" stroke="#3c4151" stroke-width="1.3" /></svg>
<svg class="abs" style="left:104.3px;top:770.3px" width="16.4" height="16.4" viewBox="0 0 16 16"><circle cx="8" cy="8" r="6.8" fill="none" stroke="#3c4151" stroke-width="1.3"/></svg>
<svg class="abs" style="left:126.8px;top:770.3px" width="16.4" height="16.4" viewBox="0 0 16 16"><path d="M13 3.500a6.800 6.800 0 1 0 -2 10.500" fill="none" stroke="#3c4151" stroke-width="1.3" /></svg>
<svg class="abs" style="left:149.3px;top:770.3px" width="16.4" height="16.4" viewBox="0 0 16 16"><path d="M13.500 5a6.800 6.800 0 1 0 -5 9.700" fill="none" stroke="#3c4151" stroke-width="1.3" /><circle cx="13.5" cy="5" r="1.3" fill="#62a0ea" stroke="none" stroke-width="0"/><circle cx="3" cy="3.5" r="1.3" fill="#62a0ea" stroke="none" stroke-width="0"/><circle cx="7" cy="14.5" r="1.3" fill="#62a0ea" stroke="none" stroke-width="0"/></svg>
<svg class="abs" style="left:172.3px;top:770.3px" width="16.4" height="16.4" viewBox="0 0 16 16"><path d="M4 11.500c-3 0-3.500-3.500-1-4.500c0-3 3.500-4 5-2c2-1.500 5 0 4.500 2.500c2.500 0.500 2.500 4 0 4.500c-1 2-4 2-5 0.500c-1 1-3 0.500-3.500-1z" fill="none" stroke="#3c4151" stroke-width="1.3" /></svg>
<svg class="abs" style="left:194.8px;top:770.3px" width="16.4" height="16.4" viewBox="0 0 16 16"><path d="M4 3l9 9M2 5.500l4-4M10.500 14.500l4-4" fill="none" stroke="#c4c4c4" stroke-width="1.3" /></svg>
<svg class="abs" style="left:217.3px;top:770.3px" width="16.4" height="16.4" viewBox="0 0 16 16"><path d="M4 2v12M1 2h14M1 14h14" fill="none" stroke="#c4c4c4" stroke-width="1.3" /></svg>
<svg class="abs" style="left:459.3px;top:770.3px" width="16.4" height="16.4" viewBox="0 0 16 16"><rect x="2" y="2" width="8" height="8" fill="none" stroke="#c9c9c9" stroke-width="1.2"/><rect x="6" y="6" width="8" height="8" fill="#f0f0f0" stroke="#c9c9c9" stroke-width="1.2"/><rect x="0.5" y="0.5" width="1.5" height="1.5" fill="#c9c9c9" stroke="none" stroke-width="0"/><rect x="13.5" y="0.5" width="1.5" height="1.5" fill="#c9c9c9" stroke="none" stroke-width="0"/><rect x="0.5" y="13.5" width="1.5" height="1.5" fill="#c9c9c9" stroke="none" stroke-width="0"/></svg>
<svg class="abs" style="left:481.8px;top:770.3px" width="16.4" height="16.4" viewBox="0 0 16 16"><path d="M2 10v-8h8" fill="none" stroke="#c9c9c9" stroke-width="1.2" /><rect x="6" y="6" width="8" height="8" fill="#f0f0f0" stroke="#c9c9c9" stroke-width="1.2"/><rect x="0.5" y="0.5" width="1.5" height="1.5" fill="#c9c9c9" stroke="none" stroke-width="0"/><rect x="13.5" y="0.5" width="1.5" height="1.5" fill="#c9c9c9" stroke="none" stroke-width="0"/><rect x="0.5" y="13.5" width="1.5" height="1.5" fill="#c9c9c9" stroke="none" stroke-width="0"/></svg>
<svg class="abs" style="left:504.8px;top:770.3px" width="16.4" height="16.4" viewBox="0 0 16 16"><rect x="2" y="2" width="8" height="8" fill="#e0e0e0" stroke="#c9c9c9" stroke-width="1.2"/><rect x="6" y="6" width="8" height="8" fill="#f0f0f0" stroke="#c9c9c9" stroke-width="1.2"/><path d="M8 9h4M8 11.500h4" fill="none" stroke="#c9c9c9" stroke-width="1" /><rect x="0.5" y="0.5" width="1.5" height="1.5" fill="#c9c9c9" stroke="none" stroke-width="0"/><rect x="13.5" y="0.5" width="1.5" height="1.5" fill="#c9c9c9" stroke="none" stroke-width="0"/></svg>
<svg class="abs" style="left:527.3px;top:770.3px" width="16.4" height="16.4" viewBox="0 0 16 16"><rect x="1.5" y="1.5" width="13" height="13" fill="none" stroke="#c9c9c9" stroke-width="1" stroke-dasharray="2 1.500"/><rect x="4" y="4" width="6" height="6" fill="none" stroke="#c9c9c9" stroke-width="1.2"/><rect x="6.5" y="6.5" width="6" height="6" fill="none" stroke="#c9c9c9" stroke-width="1.2"/></svg>
<svg class="abs" style="left:549.8px;top:770.3px" width="16.4" height="16.4" viewBox="0 0 16 16"><rect x="2" y="1.5" width="8" height="13" fill="#f4f4f4" stroke="#c9c9c9" stroke-width="1.2"/><rect x="7" y="5" width="6" height="7" fill="#e0e0e0" stroke="#c9c9c9" stroke-width="1.2"/></svg>
<svg class="abs" style="left:579.3px;top:770.3px" width="16.4" height="16.4" viewBox="0 0 16 16"><rect x="1.5" y="1.5" width="8" height="8" fill="#d4d4d4" stroke="#c9c9c9" stroke-width="1"/><rect x="7.5" y="7.5" width="6" height="6" fill="#f0f0f0" stroke="#c9c9c9" stroke-width="1.2"/></svg>
<svg class="abs" style="left:601.8px;top:770.3px" width="16.4" height="16.4" viewBox="0 0 16 16"><rect x="1.5" y="1.5" width="6" height="6" fill="#f0f0f0" stroke="#c9c9c9" stroke-width="1.2"/><rect x="5.5" y="5.5" width="8" height="8" fill="#d4d4d4" stroke="#c9c9c9" stroke-width="1"/><rect x="9" y="9" width="5" height="5" fill="#f0f0f0" stroke="#c9c9c9" stroke-width="1.2"/></svg>
<svg class="abs" style="left:624.8px;top:770.3px" width="16.4" height="16.4" viewBox="0 0 16 16"><rect x="1.5" y="1.5" width="10" height="10" fill="#d0d0d0" stroke="#c9c9c9" stroke-width="1"/><rect x="8" y="8" width="6" height="6" fill="#f0f0f0" stroke="#c9c9c9" stroke-width="1.2"/></svg>
<svg class="abs" style="left:647.3px;top:770.3px" width="16.4" height="16.4" viewBox="0 0 16 16"><rect x="1.5" y="1.5" width="10" height="10" fill="#d0d0d0" stroke="#c9c9c9" stroke-width="1"/><rect x="8" y="8" width="6" height="6" fill="#f0f0f0" stroke="#c9c9c9" stroke-width="1.2"/></svg>
<svg class="abs" style="left:669.8px;top:770.3px" width="16.4" height="16.4" viewBox="0 0 16 16"><rect x="1" y="1" width="14" height="10.5" fill="#fff" stroke="#222" stroke-width="1.5"/><path d="M5 4l2-1.500h3v4l-2 1.500h-3z" fill="#ffc000" stroke="#7a5a00" stroke-width="0.8" /><path d="M8 15l6-6" fill="none" stroke="#62a0ea" stroke-width="1.6" /><path d="M9 10l5 5" fill="none" stroke="#e8604c" stroke-width="1.2" /></svg>
<svg class="abs" style="left:692.3px;top:770.3px" width="16.4" height="16.4" viewBox="0 0 16 16"><path d="M2 1v14M14 3v10" fill="none" stroke="#c9c9c9" stroke-width="1.2"  stroke-dasharray="3 1.500"/><path d="M5 8h6M7.500 6l-2.500 2 2.500 2" fill="none" stroke="#c9c9c9" stroke-width="1.2" /></svg>
<svg class="abs" style="left:714.8px;top:770.3px" width="16.4" height="16.4" viewBox="0 0 16 16"><path d="M8 1.500v13M1.500 8h13" fill="none" stroke="#d0d0d0" stroke-width="1.4" /><path d="M5.500 4l2.500-3 2.500 3zM5.500 12l2.500 3 2.500-3zM4 5.500l-3 2.500 3 2.500zM12 5.500l3 2.500-3 2.500z" fill="#d0d0d0" stroke="none" stroke-width="0" /></svg>
<svg class="abs" style="left:737.8px;top:770.3px" width="16.4" height="16.4" viewBox="0 0 16 16"><rect x="0.5" y="0.5" width="15" height="15" fill="none" stroke="#a9ccf5" stroke-width="1" stroke-dasharray="1.500 1.500"/><rect x="3" y="3" width="6.5" height="6.5" fill="#fff" stroke="#666" stroke-width="1.1"/><circle cx="10" cy="10" r="3.2" fill="#fff" stroke="#666" stroke-width="1.1"/></svg>
<div class="sep" style="left:241px;top:769.500px;height:19px"></div>
<div class="sep" style="left:453.5px;top:769.500px;height:19px"></div>
<div class="sep" style="left:573.5px;top:769.500px;height:19px"></div>
<div class="sep" style="left:1105px;top:769.500px;height:19px"></div>
<div class="sep" style="left:1180px;top:769.500px;height:19px"></div>
<div class="abs" style="left:249.5px;top:782px;width:15px;height:4.5px;background:#000;"></div>
<div class="dd" style="left:271px;top:777.500px;border-width:2.500px 2.500px 0 2.500px;border-top-width:3px"></div>
<div class="abs" style="left:280.5px;top:770px;width:58.5px;height:16.5px;background:#fff;border:1px solid #c6c6c6"></div><div class="abs" style="left:283.7px;top:773px;font:9.5px 'Liberation Sans',sans-serif;letter-spacing:0px;color:#333;white-space:nowrap;line-height:11px;">0.1 mm</div>
<div class="abs" style="left:323.5px;top:770px;width:15.5px;height:16.5px;background:#e4e4e4;border:1px solid #c0c0c0"></div><svg class="abs" style="left:323.5px;top:770px;" width="15.5" height="16.5" viewBox="0 0 15.5 16.5"><path d="M1 8.25h13.5" stroke="#c0c0c0" stroke-width="1"/><path d="M5.25 5.75h5l-2.500-3zM5.25 10.75h5l-2.500 3z" fill="#333"/></svg>
<div class="abs" style="left:343.7px;top:770px;width:103.80000000000001px;height:17px;background:#fff;border:1px solid #c6c6c6"></div>
<div class="abs" style="left:350px;top:776.4px;width:79px;height:1.4px;background:#333;"></div>
<div class="dd" style="left:438.500px;top:777.500px;border-width:2.500px 2.500px 0 2.500px;border-top-width:3px"></div>
<div class="dd" style="left:759.500px;top:783px;border-width:2.500px 2.500px 0 2.500px;border-top-width:3px"></div>
<div class="grip" style="left:773px;top:771.500px;height:14px"></div>
<svg class="abs" style="left:784px;top:772px;" width="11" height="14" viewBox="0 0 11 14"><path d="M0.500 1h10M5.500 1v13" stroke="#3c4151" stroke-width="1.600" fill="none"/></svg>
<div class="abs" style="left:802.5px;top:769.5px;width:131.5px;height:18.5px;background:#fff;border:1px solid #c6c6c6"></div>
<div class="abs" style="left:807.0px;top:773px;font:9.8px 'Liberation Sans',sans-serif;letter-spacing:0px;color:#444;white-space:nowrap;line-height:11px;">Arial</div>
<div class="dd" style="left:925px;top:778px;border-width:2.500px 2.500px 0 2.500px;border-top-width:3px"></div>
<div class="abs" style="left:937.5px;top:769.5px;width:59.0px;height:18.5px;background:#fff;border:1px solid #c6c6c6"></div>
<div class="abs" style="left:942.5px;top:773px;font:9.8px 'Liberation Sans',sans-serif;letter-spacing:-0.29px;color:#444;white-space:nowrap;line-height:11px;">2.5 mm</div>
<div class="dd" style="left:988px;top:778px;border-width:2.500px 2.500px 0 2.500px;border-top-width:3px"></div>
<div class="abs" style="left:1004.5px;top:782px;width:15px;height:4.5px;background:#000;"></div>
<div class="dd" style="left:1026px;top:777.500px;border-width:2.500px 2.500px 0 2.500px;border-top-width:3px"></div>
<div class="abs" style="left:1038.5px;top:770px;font:17px 'Liberation Sans',sans-serif;letter-spacing:0px;color:#3c4151;white-space:nowrap;line-height:19px;">B</div>
<div class="abs" style="left:1064.0px;top:770px;font:17px 'Liberation Sans',sans-serif;letter-spacing:0px;color:#3c4151;white-space:nowrap;line-height:19px;font-style:italic">I</div>
<div class="abs" style="left:1084.0px;top:772px;font:15px 'Liberation Sans',sans-serif;letter-spacing:0px;color:#3c4151;white-space:nowrap;line-height:17px;">U</div>
<div class="abs" style="left:1084px;top:786px;width:10.5px;height:1.2px;background:#3c4151;"></div>
<div class="abs" style="left:1109.2px;top:768.8px;width:20.4px;height:19.5px;background:#cfcfcf;"></div>
<svg class="abs" style="left:1112.5px;top:771px;" width="14" height="15" viewBox="0 0 14 15"><path d="M0.5 1.6h12.0" stroke="#3c4151" stroke-width="1.200"/><path d="M0.5 5.4h7.0" stroke="#3c4151" stroke-width="1.200"/><path d="M0.5 9.2h12.0" stroke="#3c4151" stroke-width="1.200"/><path d="M0.5 12.999999999999998h7.0" stroke="#3c4151" stroke-width="1.200"/></svg>
<svg class="abs" style="left:1135.5px;top:771px;" width="14" height="15" viewBox="0 0 14 15"><path d="M1 1.6h11.5" stroke="#3c4151" stroke-width="1.200"/><path d="M3 5.4h7.5" stroke="#3c4151" stroke-width="1.200"/><path d="M1 9.2h11.5" stroke="#3c4151" stroke-width="1.200"/><path d="M3 12.999999999999998h7.5" stroke="#3c4151" stroke-width="1.200"/></svg>
<svg class="abs" style="left:1158px;top:771px;" width="14" height="15" viewBox="0 0 14 15"><path d="M0.5 1.6h11.5" stroke="#3c4151" stroke-width="1.200"/><path d="M5 5.4h7" stroke="#3c4151" stroke-width="1.200"/><path d="M0.5 9.2h11.5" stroke="#3c4151" stroke-width="1.200"/><path d="M5 12.999999999999998h7" stroke="#3c4151" stroke-width="1.200"/></svg>
<svg class="abs" style="left:1186px;top:769px;" width="8" height="20" viewBox="0 0 8 20"><path d="M0.500 1.500l2.500 2-2.500 2M4 1.500l2.500 2-2.500 2" fill="none" stroke="#777" stroke-width="1"/><path d="M1.500 14h5l-2.500 2.800z" fill="#666"/></svg>
<div class="abs" style="left:1px;top:791.7px;width:1198px;height:19px;background:#efefef;"></div>
<div class="abs" style="left:8.7px;top:797px;font:10px 'Liberation Sans',sans-serif;letter-spacing:-0.35px;color:#444;white-space:nowrap;line-height:11px;">Ready</div>
<div class="abs" style="left:950.0px;top:797px;font:10px 'Liberation Sans',sans-serif;letter-spacing:-0.11px;color:#444;white-space:nowrap;line-height:11px;">1822.079,2005.796,0</div>
<div class="abs" style="left:1079.0px;top:797px;font:10px 'Liberation Sans',sans-serif;letter-spacing:0.04px;color:#444;white-space:nowrap;line-height:11px;">MM</div>
<div class="abs" style="left:1106.0px;top:797px;font:10px 'Liberation Sans',sans-serif;letter-spacing:-1.98px;color:#b4bac4;white-space:nowrap;line-height:11px;">CAP</div>
<div class="abs" style="left:1129.6px;top:797px;font:10px 'Liberation Sans',sans-serif;letter-spacing:-0.54px;color:#b4bac4;white-space:nowrap;line-height:11px;">NUM</div>
<div class="abs" style="left:1158.3px;top:797px;font:10px 'Liberation Sans',sans-serif;letter-spacing:-1.99px;color:#b4bac4;white-space:nowrap;line-height:11px;">SCRL</div>
<svg class="abs" style="left:1187px;top:800px;" width="9" height="9" viewBox="0 0 9 9"><rect x="6" y="0" width="1.500" height="1.500" fill="#aaa"/><rect x="3" y="3" width="1.500" height="1.500" fill="#aaa"/><rect x="6" y="3" width="1.500" height="1.500" fill="#aaa"/><rect x="0" y="6" width="1.500" height="1.500" fill="#aaa"/><rect x="3" y="6" width="1.500" height="1.500" fill="#aaa"/><rect x="6" y="6" width="1.500" height="1.500" fill="#aaa"/></svg>
<div id="frame"></div>
</body>
</html>
